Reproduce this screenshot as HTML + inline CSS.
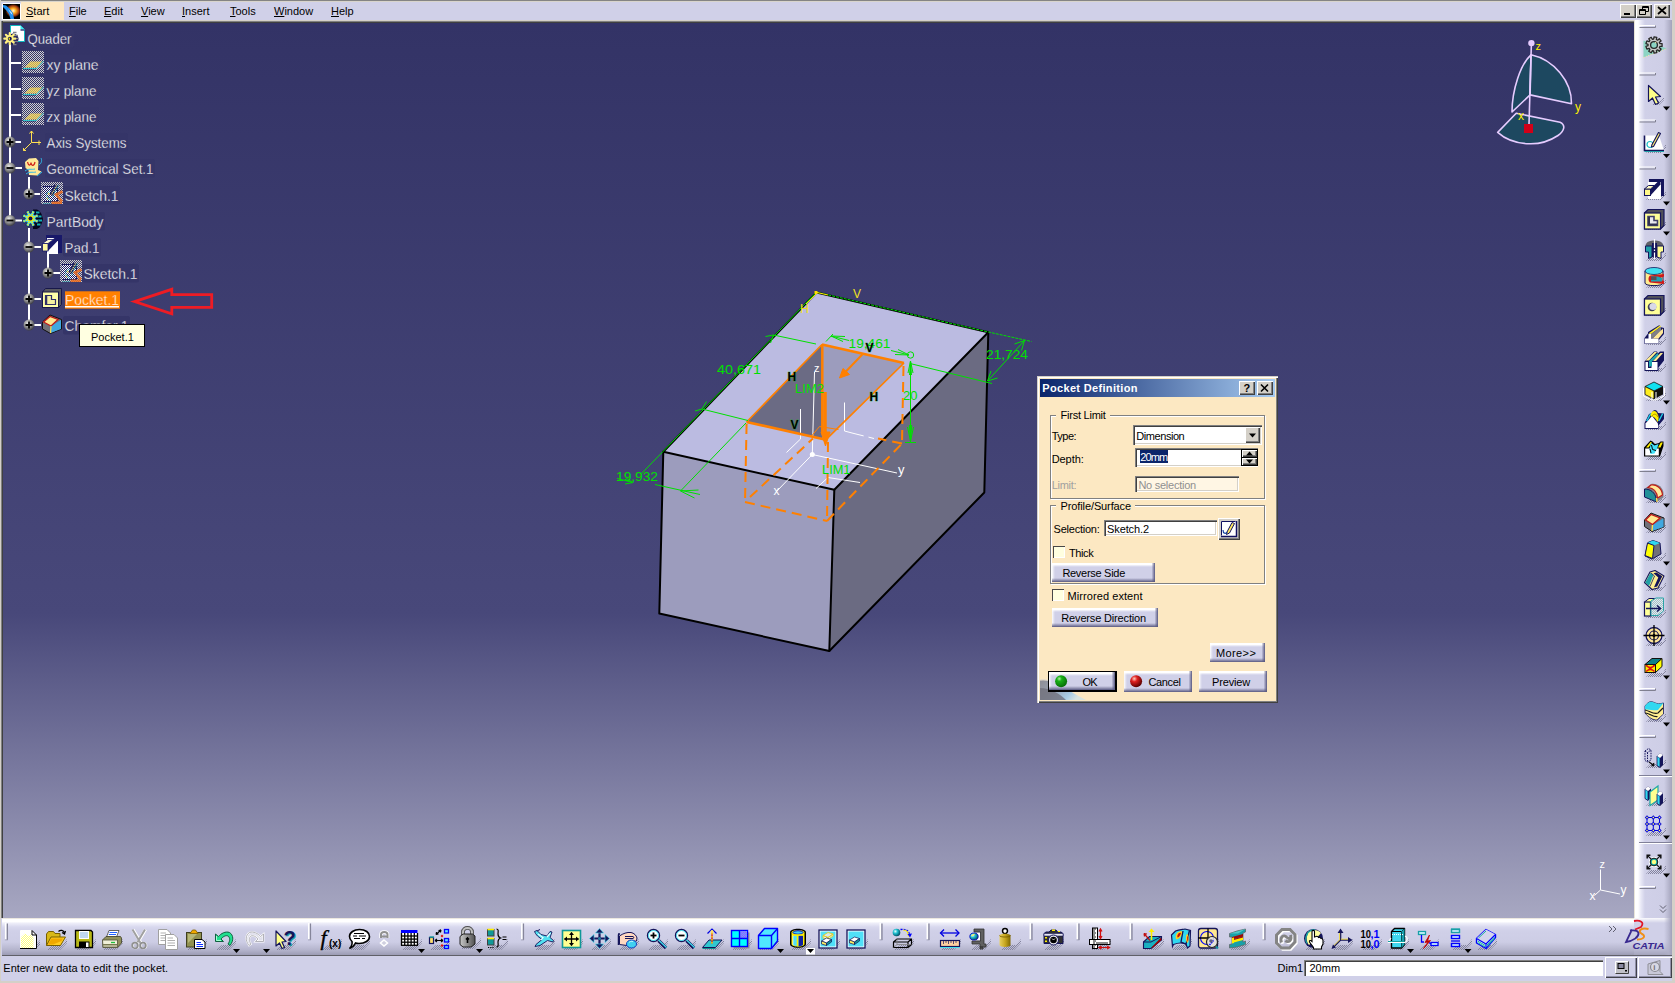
<!DOCTYPE html>
<html>
<head>
<meta charset="utf-8">
<title>CATIA V5 - Quader</title>
<style>
html,body{margin:0;padding:0;}
body{width:1675px;height:983px;overflow:hidden;position:relative;background:#d0d0e8;font-family:"Liberation Sans",sans-serif;font-size:11px;color:#000;}
.abs{position:absolute;}
#frame-top{left:0;top:0;width:1675px;height:2px;background:linear-gradient(to bottom,#848484 0,#848484 1px,#d8d4cc 1px,#d8d4cc 2px);}
#frame-left{left:0;top:0;width:1px;height:983px;background:#d4d0c8;}
#frame-right{left:1672px;top:0;width:3px;height:983px;background:#d4d0c8;}
#frame-bottom{left:0;top:981px;width:1675px;height:2px;background:#d4d0c8;}
#menubar{left:2px;top:2px;width:1670px;height:18px;background:#d0d0e8;}
.mi{position:absolute;top:2px;height:18px;line-height:18px;font-size:11px;color:#000;white-space:nowrap;}
.mi u{text-decoration:underline;}
#viewport{left:2px;top:23px;width:1632px;height:895px;background:linear-gradient(to bottom,#333366 0%,#48487a 66%,#a8a8c2 100%);overflow:hidden;}
#vp-top{left:2px;top:20px;width:1632px;height:3px;background:linear-gradient(to bottom,#d4d0c8 0,#d4d0c8 1px,#808080 1px,#808080 2px,#404040 2px);}
#vp-left{left:1px;top:21px;width:2px;height:897px;background:linear-gradient(to right,#808080 0,#808080 1px,#404040 1px,#404040 2px);}
#btoolbar{left:2px;top:918px;width:1632px;height:37px;background:linear-gradient(to bottom,#ece8e0 0px,#ece8e0 1px,#ffffff 1px,#ffffff 3.5px,#ececf8 5.5px,#d8d8ee 9px,#d0d0e8 13px,#cdcde5 24px,#b4b4cc 32px,#9c9cb4 37px);}
#bline{left:2px;top:955px;width:1670px;height:1px;background:#606068;}
#status{left:2px;top:956px;width:1670px;height:25px;background:#d0d0e8;}
#rtoolbar{left:1634px;top:20px;width:38px;height:898px;background:linear-gradient(to right,#e8e4d8 0px,#e8e4d8 1px,#ffffff 1px,#ffffff 4px,#e8e8f6 7px,#d0d0e8 11px,#cecee6 30px,#b4b4cc 35px,#a2a2ba 38px);}
.wbtn{top:4px;width:16px;height:14px;background:#d4d0c8;box-shadow:inset 1px 1px 0 #fff,inset -1px -1px 0 #404040,inset -2px -2px 0 #808080;}
.wbtn svg{display:block;}
.t{position:absolute;white-space:nowrap;font-size:11px;line-height:14px;height:14px;}
#dlg{background:#fce8c2;box-shadow:inset 1px 1px 0 #d4d0c8,inset 2px 2px 0 #ffffff,inset -1px -1px 0 #404040,inset -2px -2px 0 #808080;}
#dlgtitle{background:linear-gradient(to right,#0a246a 0%,#a6caf0 100%);}
.tbtn{width:16px;height:14px;background:#d4d0c8;box-shadow:inset 1px 1px 0 #fff,inset -1px -1px 0 #404040,inset -2px -2px 0 #808080;}
.tbtn svg{display:block;}
.grp{border:1px solid #808080;box-shadow:1px 1px 0 #fff,inset 1px 1px 0 #fff;}
.sunk{box-shadow:inset 1px 1px 0 #808080,inset 2px 2px 0 #404040,inset -1px -1px 0 #fff,inset -2px -2px 0 #d4d0c8;}
.cbtn{background:#d4d0c8;box-shadow:inset 1px 1px 0 #fff,inset -1px -1px 0 #404040,inset -2px -2px 0 #808080;}
.btn{background:linear-gradient(to left,#585880 0,rgba(88,88,128,0.55) 1.5px,rgba(88,88,128,0) 3.5px) ,linear-gradient(to top,#585880 0,rgba(88,88,128,0.6) 1.5px,rgba(88,88,128,0) 4px),linear-gradient(to bottom,#fff 0,#fff 1.5px,rgba(255,255,255,0) 4px),linear-gradient(to right,#fff 0,rgba(255,255,255,0.6) 1px,rgba(255,255,255,0) 3px),#d0d0e8;}
.btn2{background:#d4d0c8;box-shadow:inset 1px 1px 0 #fff,inset -1px -1px 0 #404040,inset -2px -2px 0 #808080;}
.chk{width:12px;height:12px;background:#ffffe0;box-shadow:inset 1px 1px 0 #484848,inset -1px -1px 0 #ffffff;}
.sbtn{background:#d0d0e8;box-shadow:inset 1px 1px 0 #fff,inset -1px -1px 0 #404048,inset -2px -2px 0 #9090a8;}
#corner{left:1634px;top:918px;width:38px;height:37px;background:linear-gradient(to left,#a0a0b8 0,rgba(176,176,200,0.8) 3px,rgba(208,208,232,0) 8px),linear-gradient(to bottom,rgba(255,255,255,0.9) 0,rgba(255,255,255,0) 5px),linear-gradient(to bottom,#d0d0e8 0,#d0d0e8 24px,#b8b8d0 32px,#a4a4bc 37px);}
</style>
</head>
<body>
<div class="abs" id="menubar"></div>
<div class="abs" id="starthl" style="left:21px;top:2px;width:43px;height:18px;background:#ffe8c0;"></div>
<svg class="abs" style="left:2px;top:3px" width="19" height="17" viewBox="0 0 19 17">
<defs><radialGradient id="fire" cx="0.6" cy="0.45" r="0.45"><stop offset="0" stop-color="#fff8e0"/><stop offset="0.35" stop-color="#ffb020"/><stop offset="0.75" stop-color="#a03810"/><stop offset="1" stop-color="#000"/></radialGradient></defs>
<rect x="0" y="0" width="19" height="17" rx="1.5" fill="#fff"/>
<rect x="1" y="1" width="17" height="15" fill="#000"/>
<rect x="1" y="1" width="17" height="15" fill="url(#fire)"/>
<path d="M1 2 L4 2.5 L8 6 L11 10 L12 16 L8.5 16 L7 11 L4 7 L1 4 Z" fill="#2090f0"/>
<path d="M6 6 L9.5 9.5 L10.5 12 L9 10.5 Z" fill="#e8f4ff"/>
</svg>
<div class="mi" style="left:26px"><u>S</u>tart</div>
<div class="mi" style="left:69px"><u>F</u>ile</div>
<div class="mi" style="left:104px"><u>E</u>dit</div>
<div class="mi" style="left:141px"><u>V</u>iew</div>
<div class="mi" style="left:182px"><u>I</u>nsert</div>
<div class="mi" style="left:230px"><u>T</u>ools</div>
<div class="mi" style="left:274px"><u>W</u>indow</div>
<div class="mi" style="left:331px"><u>H</u>elp</div>
<div class="abs wbtn" style="left:1620px"><svg width="16" height="14"><rect x="4" y="9" width="6" height="2" fill="#000"/></svg></div>
<div class="abs wbtn" style="left:1636px"><svg width="16" height="14"><path d="M6.5 2.5h6v5h-6z M6.5 3.5h6 M3.5 5.5h6v5h-6z M3.5 6.5h6" fill="none" stroke="#000" stroke-width="1"/><rect x="4" y="7" width="5" height="3" fill="#d4d0c8"/></svg></div>
<div class="abs wbtn" style="left:1654px"><svg width="16" height="14"><path d="M4 3l8 7M12 3l-8 7" stroke="#000" stroke-width="1.7" fill="none"/></svg></div>
<div class="abs" id="viewport"></div>
<div class="abs" id="vp-top"></div>
<div class="abs" id="vp-left"></div>
<div class="abs" id="btoolbar"></div>
<div class="abs" id="rtoolbar"></div>
<div class="abs" id="corner"></div>
<div class="abs" id="bline"></div>
<div class="abs" id="status"></div>
<div class="abs" id="frame-top"></div>
<div class="abs" id="frame-left"></div>
<div class="abs" id="frame-right"></div>
<div class="abs" id="frame-bottom"></div>
<svg class="abs" id="scene" style="left:0;top:0" width="1675" height="983" viewBox="0 0 1675 983">
<defs>
<clipPath id="vpclip"><rect x="2" y="23" width="1632" height="895"/></clipPath>
<pattern id="dith" width="2" height="2" patternUnits="userSpaceOnUse"><rect x="0" y="0" width="1" height="1" fill="#d0d0d0"/><rect x="1" y="1" width="1" height="1" fill="#d0d0d0"/></pattern>
<pattern id="dithw" width="2" height="2" patternUnits="userSpaceOnUse"><rect x="0" y="0" width="1" height="1" fill="#ffffff"/><rect x="1" y="1" width="1" height="1" fill="#ffffff"/></pattern>
<pattern id="dithy" width="2" height="2" patternUnits="userSpaceOnUse"><rect x="0" y="0" width="1" height="1" fill="#ffe060"/><rect x="1" y="1" width="1" height="1" fill="#ffe060"/><rect x="1" y="0" width="1" height="1" fill="#b0a070"/><rect x="0" y="1" width="1" height="1" fill="#b0a070"/></pattern>
<radialGradient id="ball" cx="0.4" cy="0.35" r="0.65"><stop offset="0" stop-color="#e8e8e8"/><stop offset="0.5" stop-color="#989898"/><stop offset="1" stop-color="#404048"/></radialGradient>
<g id="nplus"><circle cx="0" cy="0" r="5.5" fill="url(#ball)"/><path d="M-3.5 0h7M0 -3.5v7" stroke="#000" stroke-width="1.8" fill="none"/></g>
<g id="nminus"><circle cx="0" cy="0" r="5.5" fill="url(#ball)"/><path d="M-3.5 0h7" stroke="#000" stroke-width="1.8" fill="none"/></g>
<g id="plane"><rect x="0" y="0" width="22" height="22" fill="url(#dith)"/><path d="M2.5 16.5 L8.5 10.5 L20.5 10.5 L14.5 16.5 Z" fill="url(#dithy)"/><path d="M1 17.5h13.5l7-7.5" stroke="#30c0c8" stroke-width="1" fill="none"/><path d="M1.5 18.5h12" stroke="#102060" stroke-width="1" stroke-dasharray="1 1"/></g>
<g id="sketch"><rect x="0" y="0" width="22" height="22" fill="url(#dith)"/><rect x="2" y="4" width="15" height="16" fill="#1c1c60"/><rect x="2" y="5" width="14" height="14" fill="url(#dithw)"/><path d="M15 3 L10 13" stroke="#1c1c60" stroke-width="3.500"/><path d="M15.500 3.500 L10.300 12.600" stroke="#ffff80" stroke-width="1.300" stroke-dasharray="1 1"/><path d="M17.500 3.500 L11.300 15.500 M5 12 L9.500 9 M5.500 14 L10 19" stroke="#30b0b8" stroke-width="1.300" stroke-dasharray="1 1"/><path d="M7 11 l1.500 1.500 M6 16 l1 1" stroke="#ffff80" stroke-width="1.300"/><path d="M21.500 9.500 L15 12.500 L21 19.500 M10.500 20.800 h10.500" stroke="#f07020" stroke-width="2.600" fill="none" stroke-opacity="0.850"/><path d="M2.500 21.500h8" stroke="#30b0b8" stroke-width="1.200" stroke-dasharray="1 1"/></g>
</defs>
<g clip-path="url(#vpclip)">
<g id="model" font-family="'Liberation Sans',sans-serif">
<!-- box faces -->
<polygon points="816.5,292.5 988.3,332.3 834.3,489.8 663.3,451.8" fill="#bbbbe1"/>
<polygon points="663.3,451.8 834.3,489.8 829.3,651 659.3,613.5" fill="#9c9cbd"/>
<polygon points="834.3,489.8 988.3,332.3 984.3,492.5 829.3,651" fill="#6b6b82"/>
<!-- pocket interior -->
<polygon points="822,344.5 746.6,422 822.3,438.9" fill="#6b6b84"/>
<polygon points="822,344.5 904,363 826,439.7 822.3,438.9" fill="#9c9cbd"/>
<!-- box edges -->
<g stroke="#000000" stroke-width="2" fill="none" stroke-linejoin="round" stroke-linecap="round">
<path d="M816.5 292.5 L663.3 451.8 L834.3 489.8 L988.3 332.3 L816.5 292.5"/>
<path d="M663.3 451.8 L659.3 613.5 L829.3 651 L834.3 489.8"/>
<path d="M829.3 651 L984.3 492.5 L988.3 332.3"/>
</g>
<!-- green top edges (sketch constraints) -->
<g stroke="#00e000" stroke-width="1" fill="none">
<path d="M816.5 292.2 L988.3 332 L1031.500 341.500" stroke-dasharray="3 1"/>
<path d="M816.5 292 L663 451.500 L641 474"/>
</g>
<!-- yellow sketch origin marks -->
<g stroke="#ffe000" stroke-width="1" fill="none"><path d="M817 292.500 L828 295 M817 293 l-11 11"/><rect x="814.500" y="291" width="3" height="3" fill="#ffe000" stroke="none"/></g>
<text x="853" y="298" font-size="12" fill="#f0e020">V</text>
<text x="800" y="313" font-size="12" fill="#f0e020" textLength="9" lengthAdjust="spacingAndGlyphs">H</text>
<!-- white axis system -->
<g stroke="#ffffff" stroke-width="1" fill="none">
<path d="M812.300 454.500 L814.500 372"/>
<path d="M812.300 454.500 L776 492"/>
<path d="M812.300 454.500 L897 473"/>
<path d="M800.500 409 V439 L786.500 452.500"/>
<path d="M844.500 402.500 V431 L852 433"/>
<path d="M852 433 L874 438.500" stroke-dasharray="12 5"/>
<path d="M816 488.500 L828 477.500 L860 482.500"/>
</g>
<circle cx="812.300" cy="454.500" r="2.500" fill="#ffffff"/>
<text x="814" y="372" font-size="11" fill="#ffffff">z</text>
<text x="898" y="474" font-size="13" fill="#ffffff">y</text>
<text x="773.500" y="495" font-size="12" fill="#ffffff">x</text>
<!-- orange pocket -->
<g stroke="#ff8000" fill="none">
<path d="M822 344.500 L904 363 M746.600 422 L826 439.700" stroke-width="2.600"/>
<path d="M822 344.500 L746.600 422 M904 363 L826 439.700" stroke-width="1.700"/>
<path d="M822.300 344.500 V432" stroke-width="2.500"/>
<path d="M825 392 V438" stroke-width="3.500"/>
<path d="M821 432 L825.500 446 L830 432 Z" fill="#ff8000" stroke-width="1"/>
<path d="M811.500 436 L819.500 426.500 L838.500 429.500" stroke-width="1"/>
<path d="M862.300 354.500 L842 375.500" stroke-width="2"/>
<path d="M839.500 378 L843 368.500 L849.500 374.500 Z" fill="#ff8000" stroke-width="1"/>
<g stroke-width="2" stroke-dasharray="10 6">
<path d="M746.600 424 L745 502"/>
<path d="M745 502 L827 521"/>
<path d="M828 442 L827 521"/>
<path d="M903.500 366 L902 443"/>
<path d="M827 521 L902 443.500"/>
<path d="M750 497 L813 438.500"/>
<path d="M902 443.500 L878 438.500"/>
</g>
</g>
<!-- green dimensions -->
<g stroke="#00e000" stroke-width="1" fill="none">
<path d="M773.500 335 L816 344"/>
<path d="M773.500 335 l-8 1.500 M773.500 335 l-3 8"/>
<path d="M702 409 L748 420.500"/>
<path d="M702 409 l4.500 -7.500 M702 409 l-7 2"/>
<path d="M746 423 L680.500 491"/>
<path d="M655 484.500 L700 494.500"/>
<path d="M680.500 491 l18 -1 M680.500 491 l14 7"/>
<path d="M617 478.500 l16 4 M633 482.500 l-7 -4.500 M633 482.500 l-8 1.500"/>
<path d="M831 336 L849 340.500 M831 336 l14 0.500 M831 336 l12 5.500 M826 341.500 l7 -7.500"/>
<path d="M891 350.500 L909 355 M909 355 l-14 -0.500 M909 355 l-11 -5.500"/>
<circle cx="910.500" cy="355" r="3.200"/>
<path d="M910.500 361 V442 M905 442.500 h11"/>
<path d="M910.500 361 l-2.500 12 M910.500 361 l2.500 12 M910.500 361 l-1 14 M910.500 361 l1 14"/>
<path d="M910.500 441 l-3 -14 M910.500 441 l3 -14 M910.500 441 l-1.200 -16 M910.500 441 l1.200 -16"/>
<path d="M910 363.500 L992 383.500"/>
<path d="M1024.500 340.500 L987.500 381"/>
<path d="M1024.500 340.500 l-10 3.500 M1024.500 340.500 l-3 10"/>
<path d="M987.500 381 l3.500 -10 M987.500 381 l10 -3"/>
</g>
<g font-size="13" fill="#00e000">
<text x="717" y="373.500" textLength="44" lengthAdjust="spacingAndGlyphs">40,671</text>
<text x="616" y="480.500" textLength="42" lengthAdjust="spacingAndGlyphs">19,932</text>
<text x="848.500" y="347.500" textLength="42" lengthAdjust="spacingAndGlyphs">19,461</text>
<text x="986" y="359" textLength="42" lengthAdjust="spacingAndGlyphs">21,724</text>
<text x="903" y="400" textLength="14.500" lengthAdjust="spacingAndGlyphs">20</text>
<text x="795" y="393" textLength="29" lengthAdjust="spacingAndGlyphs">LIM2</text>
<text x="822" y="474" textLength="28.500" lengthAdjust="spacingAndGlyphs">LIM1</text>
</g>
<g font-size="12" font-weight="bold" fill="#000000" stroke="#00c000" stroke-width="0.500" paint-order="stroke">
<text x="787.500" y="381">H</text>
<text x="790.500" y="429">V</text>
<text x="865.500" y="352">V</text>
<text x="869.500" y="401">H</text>
</g>
</g>
<g id="tree" font-family="'Liberation Sans',sans-serif" font-size="15" fill="#ffffff">
<!-- structure lines -->
<g stroke="#ffffff" stroke-width="2" fill="none">
<path d="M10 44.500 V220.500"/>
<path d="M10 63 H21 M10 89 H21 M10 115 H21 M10 142 H21 M10 168 H22 M10 220.500 H22"/>
<path d="M29 177 V194 H40"/>
<path d="M29 228 V325 M29 247 H41 M29 299 H41 M29 325 H41"/>
<path d="M48 254 V273 H60"/>
</g>
<!-- label backgrounds -->
<g fill="#353568">
<rect x="26" y="29.0" width="48" height="18.500" rx="2"/>
<rect x="45" y="55.0" width="56" height="18.500" rx="2"/>
<rect x="45" y="81.0" width="54" height="18.500" rx="2"/>
<rect x="45" y="107.0" width="54" height="18.500" rx="2"/>
<rect x="45" y="133.0" width="83" height="18.500" rx="2"/>
<rect x="45" y="159.0" width="110" height="18.500" rx="2"/>
<rect x="63" y="186.0" width="57" height="18.500" rx="2"/>
<rect x="45" y="212.0" width="60" height="18.500" rx="2"/>
<rect x="63" y="238.0" width="38" height="18.500" rx="2"/>
<rect x="82" y="264.0" width="57" height="18.500" rx="2"/>
<rect x="63" y="316.0" width="67" height="18.500" rx="2"/>
</g>
<!-- nodes -->
<use href="#nplus" x="10" y="142"/>
<use href="#nminus" x="10" y="168"/>
<use href="#nplus" x="29" y="194"/>
<use href="#nminus" x="10" y="220.500"/>
<use href="#nminus" x="29" y="247"/>
<use href="#nplus" x="48" y="273"/>
<use href="#nplus" x="29" y="299"/>
<use href="#nplus" x="29" y="325"/>
<!-- Quader icon -->
<g>
<path d="M10.500 25.500 H20.500 L24.500 29.500 V41.500 H10.500 Z" fill="#ffffff" stroke="#10b8c0" stroke-width="1"/>
<path d="M20.500 25.500 V29.500 H24.500 Z" fill="#40e8f0"/><path d="M20.500 30 H24.500" stroke="#101060" stroke-width="1.200"/>
<circle cx="13" cy="39" r="5.500" fill="#14145a"/>
<g stroke="#808088" stroke-width="1.300"><path d="M13 32.500h3.500M14 35.500h4M14.500 38.500h4M14 41.500h4M13 44.500h3.500"/></g>
<g stroke="#fff080" stroke-width="2.200" stroke-linecap="round"><path d="M9.800 33.200v11M4.300 38.700h11M5.900 34.800l7.800 7.800M13.700 34.800l-7.800 7.800"/></g>
<circle cx="9.800" cy="38.700" r="3.800" fill="#fff080"/>
<circle cx="9.800" cy="38.700" r="2" fill="#14145a"/><path d="M9.300 37.700 v2" stroke="#ffee00" stroke-width="1.200"/>
</g>
<use href="#plane" x="22" y="51"/>
<use href="#plane" x="22" y="77"/>
<use href="#plane" x="22" y="103"/>
<!-- Axis systems icon -->
<g stroke="#ffe050" stroke-width="1" fill="none"><path d="M31.5 131 V142.5 H41 M31.5 142.5 L23.5 150.5 M29.5 133.5 L31.5 131 L33.5 133.5 M39 140.5 V145 M23.5 148 V150.5 H26"/></g>
<!-- Geometrical set icon -->
<g>
<path d="M25 162 L29 158.5 L36 158 L38.5 161 L38 170 L41.5 171.5 L37 175.5 L29 175 L28.5 170 L25.5 168 Z" fill="#ffe898"/>
<path d="M27.5 162 c1 4 3 4 3.5 0.5 c0.5 4 3 4 4 -0.5" stroke="#d02018" stroke-width="1.2" fill="none"/>
<path d="M25 171 c4 -3 6 -1 10 -2 M26 174 c4 -3 6 -1 10 -2 M39 165 c3 -2 3 -5 2 -7 M37 176 l5 -4" stroke="#30b8e8" stroke-width="1" fill="none"/>
</g>
<use href="#sketch" x="41" y="182"/>
<!-- PartBody icon -->
<g>
<path d="M33 209.500 H37 L39.500 211 L41.500 214 L43 219 L41.500 224 L39.500 227.500 L37 229 H33 Z" fill="#05051c"/>
<g stroke="#10b0b8" stroke-width="2"><path d="M36 212.500h3.500M37 216.500h4.500M37.500 220.500h4.500M37 224.500h3.500"/></g>
<path d="M38.67 219.96 L37.31 223.25 L34.70 221.73 L33.73 222.70 L35.25 225.31 L31.96 226.67 L31.18 223.76 L29.82 223.76 L29.04 226.67 L25.75 225.31 L27.27 222.70 L26.30 221.73 L23.69 223.25 L22.33 219.96 L25.24 219.18 L25.24 217.82 L22.33 217.04 L23.69 213.75 L26.30 215.27 L27.27 214.30 L25.75 211.69 L29.04 210.33 L29.82 213.24 L31.18 213.24 L31.96 210.33 L35.25 211.69 L33.73 214.30 L34.70 215.27 L37.31 213.75 L38.67 217.04 L35.76 217.82 L35.76 219.18 Z" fill="#40dcff" stroke="#10103c" stroke-width="0.600"/>
<path d="M34.01 219.95 L37.52 221.41 M31.95 222.01 L33.41 225.52 M29.05 222.01 L27.59 225.52 M26.99 219.95 L23.48 221.41 M26.99 217.05 L23.48 215.59 M29.05 214.99 L27.59 211.48 M31.95 214.99 L33.41 211.48 M34.01 217.05 L37.52 215.59 " stroke="#ffee00" stroke-width="1.600" stroke-dasharray="1.300 1.100" fill="none"/>
<circle cx="30.500" cy="218.500" r="3.200" fill="#ffee00"/><circle cx="30.500" cy="218.500" r="2" fill="#10104a"/>
</g>
<!-- Pad.1 icon -->
<g>
<rect x="46" y="235" width="16" height="18" fill="#18186a"/>
<rect x="47" y="238" width="11" height="16" fill="#ffffff"/>
<path d="M48 243.500 L54.500 238 H58 V240.500 L48 251 Z" fill="#18186a"/>
<rect x="42.500" y="243.500" width="5.500" height="7.500" fill="#fff8a0" stroke="#18186a" stroke-width="0.800"/>
<path d="M42.500 243.500 L48 239.500 H53.500 L48 243.500 Z" fill="#fffbd0" stroke="#18186a" stroke-width="0.800"/>
</g>
<use href="#sketch" x="60" y="260"/>
<!-- Pocket.1 icon -->
<g>
<path d="M42.500 292 L45.500 288.500 H61.500 V304.500 L58.500 307.500 H42.500 Z" fill="#585860" stroke="#18184a" stroke-width="1"/>
<rect x="42.500" y="292" width="16" height="15.500" fill="#ffffa8" stroke="#18184a" stroke-width="1"/>
<path d="M45.500 295.500 H51.500 V299.500 H55.500 V304.500 H45.500 Z" fill="#f4f0a0" stroke="#303068" stroke-width="1.200"/>
<path d="M46.500 296 V304" stroke="#303068" stroke-width="1.500"/>
</g>
<!-- Chamfer icon -->
<g>
<path d="M42.500 322 L50 315 L61.500 319.500 V329 L50.500 333.500 L42.500 329 Z" fill="#707078" stroke="#101010" stroke-width="1"/>
<path d="M50.500 333 L51 326 L61 320 V329 Z" fill="#40a8e0"/>
<path d="M43.500 322 L50 316.500 L58 319.500 L51 326 Z" fill="#ffe890" stroke="#c01818" stroke-width="1.200"/>
<path d="M51 326 L50.500 333" stroke="#ffe050" stroke-width="1.200"/>
</g>
<!-- labels -->
<g stroke="#353568" stroke-width="0.300">
<text x="27.500" y="44" textLength="44" lengthAdjust="spacingAndGlyphs">Quader</text>
<text x="46.500" y="70" textLength="52" lengthAdjust="spacingAndGlyphs">xy plane</text>
<text x="46.500" y="96" textLength="50" lengthAdjust="spacingAndGlyphs">yz plane</text>
<text x="46.500" y="122" textLength="50" lengthAdjust="spacingAndGlyphs">zx plane</text>
<text x="46.500" y="148" textLength="80" lengthAdjust="spacingAndGlyphs">Axis Systems</text>
<text x="46.500" y="174" textLength="107" lengthAdjust="spacingAndGlyphs">Geometrical Set.1</text>
<text x="64.500" y="201" textLength="54" lengthAdjust="spacingAndGlyphs">Sketch.1</text>
<text x="46.500" y="227" textLength="57" lengthAdjust="spacingAndGlyphs">PartBody</text>
<text x="64.500" y="253" textLength="35" lengthAdjust="spacingAndGlyphs">Pad.1</text>
<text x="83.500" y="279" textLength="54" lengthAdjust="spacingAndGlyphs">Sketch.1</text>
</g>
<rect x="65" y="291.300" width="55" height="17.400" fill="#ff8000"/>
<text x="65" y="305" textLength="54" lengthAdjust="spacingAndGlyphs" stroke="#ff8000" stroke-width="0.400">Pocket.1</text>
<rect x="65" y="306" width="54" height="1.500" fill="#ffffff"/>
<text x="64.500" y="331" textLength="64" lengthAdjust="spacingAndGlyphs" stroke="#353568" stroke-width="0.300">Chamfer.1</text>
<!-- red arrow -->
<path d="M134.500 301.600 L171.800 289.300 V294.700 H211.700 V307.300 H171.800 V313.900 Z" fill="none" stroke="#ee1c24" stroke-width="2.800" stroke-linejoin="miter" stroke-miterlimit="10"/>
<!-- tooltip -->
<rect x="79.500" y="324.500" width="65" height="22" fill="#ffffe1" stroke="#000000" stroke-width="1"/>
<text x="91" y="340.500" font-size="11" fill="#000000">Pocket.1</text>
</g>
<g id="compass" font-family="'Liberation Sans',sans-serif">
<g fill="#1d4860" stroke="#e6ccff" stroke-width="1.600" stroke-linejoin="round">
<path d="M1516.200 113.300 L1560 122.200 C1566 125 1564.500 131 1558 135.500 C1549 141.500 1538 144 1529.500 143.800 C1517 143.500 1505 139 1497.700 132.400 Z"/>
<path d="M1531 54.800 C1520.500 64.200 1512 89.900 1512 112 L1530.100 94.900 Z"/>
<path d="M1531 54.800 C1553.900 59.700 1572 81.700 1571.500 103.800 L1530.100 94.900 Z"/>
</g>
<path d="M1531.400 43 L1529 124.500" stroke="#e6ccff" stroke-width="1.600" fill="none"/>
<circle cx="1531.400" cy="43.100" r="3.200" fill="#e6ccff"/>
<rect x="1524" y="124" width="9" height="9" fill="#d00018"/>
<g fill="#ffee00" font-size="11">
<text x="1535.500" y="49.500">z</text>
<text x="1575" y="110.500" font-size="12">y</text>
<text x="1518" y="120" font-size="12">x</text>
</g>
<!-- small axis bottom right -->
<g stroke="#ffffff" stroke-width="1" fill="none">
<path d="M1600.500 869.500 V890 L1620 894"/>
<path d="M1600.500 890 L1594.500 895.500"/>
</g>
<g fill="#ffffff" font-size="11">
<text x="1599.500" y="868.300">z</text>
<text x="1620.500" y="894" font-size="12">y</text>
<text x="1589.500" y="899.500" font-size="12">x</text>
</g>
</g>
</g>
</svg>
<div class="abs" id="dlg" style="left:1037px;top:376px;width:241px;height:327px;">
<div class="abs" id="dlgtitle" style="left:3px;top:3px;width:235px;height:18px;"></div>
<div class="t" style="left:5.3px;top:5.0px;color:#fff;font-weight:bold;letter-spacing:0.331px;">Pocket Definition</div>
<div class="abs tbtn" style="left:202px;top:5px;"><svg width="16" height="14"><text x="4.500" y="11" font-family="'Liberation Sans',sans-serif" font-weight="bold" font-size="11" fill="#000">?</text></svg></div>
<div class="abs tbtn" style="left:220px;top:5px;"><svg width="16" height="14"><path d="M4 3.500l7 7M11 3.500l-7 7" stroke="#000" stroke-width="1.600" fill="none"/></svg></div>
<div class="abs grp" style="left:13px;top:39px;width:213px;height:82px;"></div>
<div class="abs" style="left:19px;top:38px;width:54px;height:4px;background:#fce8c2;"></div>
<div class="t" style="left:23.6px;top:32.3px;color:#000;letter-spacing:-0.241px;">First Limit</div>
<div class="t" style="left:14.7px;top:52.9px;color:#000;letter-spacing:-0.484px;">Type:</div>
<div class="abs sunk" style="left:96px;top:49px;width:129px;height:20px;background:#fff;"></div>
<div class="t" style="left:99.3px;top:52.9px;color:#000;letter-spacing:-0.441px;">Dimension</div>
<div class="abs cbtn" style="left:208px;top:51px;width:15px;height:16px;"><svg width="15" height="16"><path d="M4 6.500h7l-3.500 4z" fill="#000"/></svg></div>
<div class="t" style="left:14.7px;top:76.1px;color:#000;letter-spacing:-0.073px;">Depth:</div>
<div class="abs sunk" style="left:98px;top:72px;width:123px;height:19px;background:#fff;"></div>
<div class="abs" style="left:103px;top:74px;width:28px;height:13px;background:#0a246a;"></div>
<div class="t" style="left:103.3px;top:74.4px;color:#fff;letter-spacing:-0.891px;">20mm</div>
<div class="abs" style="left:204px;top:73px;width:17px;height:17px;background:#000;"></div>
<div class="abs cbtn" style="left:205px;top:74px;width:15px;height:7px;"><svg width="15" height="7" style="display:block"><path d="M4 5.500h7l-3.500 -4z" fill="#000"/></svg></div>
<div class="abs cbtn" style="left:205px;top:82px;width:15px;height:7px;"><svg width="15" height="7" style="display:block"><path d="M4 1.500h7l-3.500 4z" fill="#000"/></svg></div>
<div class="t" style="left:14.7px;top:102.2px;color:#a0a0a0;letter-spacing:-0.297px;">Limit:</div>
<div class="abs sunk" style="left:98px;top:100px;width:104px;height:16px;background:#fff6e4;"></div>
<div class="t" style="left:101.4px;top:102.2px;color:#909090;letter-spacing:-0.255px;">No selection</div>
<div class="abs grp" style="left:13px;top:129px;width:213px;height:77px;"></div>
<div class="abs" style="left:19px;top:128px;width:79px;height:4px;background:#fce8c2;"></div>
<div class="t" style="left:23.6px;top:123.0px;color:#000;letter-spacing:-0.119px;">Profile/Surface</div>
<div class="t" style="left:16.6px;top:146.0px;color:#000;letter-spacing:-0.234px;">Selection:</div>
<div class="abs sunk" style="left:67px;top:144px;width:113px;height:16px;background:#fff;"></div>
<div class="t" style="left:70.0px;top:146.0px;color:#000;letter-spacing:-0.105px;">Sketch.2</div>
<div class="abs btn2" style="left:181px;top:142px;width:22px;height:22px;"><svg width="22" height="22" style="display:block"><rect x="3" y="3" width="15" height="15" fill="#fff"/><path d="M3.500 17.500V3.500H17.500" stroke="#101060" fill="none"/><path d="M3 18.500h15.500V3" stroke="#101060" stroke-width="1.500" fill="none"/><path d="M9 14 L14 4.500 L16.500 5.500 L11.500 15 L8.500 16.500 Z" fill="#ffe860" stroke="#101060" stroke-width="1"/><path d="M5 12 c0 4 3 4 4 2" stroke="#1040a0" fill="none" stroke-width="1.200"/></svg></div>
<div class="abs chk" style="left:16px;top:170px;"></div>
<div class="t" style="left:31.9px;top:170.1px;color:#000;letter-spacing:-0.356px;">Thick</div>
<div class="abs btn" style="left:15px;top:187px;width:103px;height:19px;"></div>
<div class="t" style="left:25.4px;top:189.7px;color:#000;letter-spacing:-0.289px;">Reverse Side</div>
<div class="abs chk" style="left:15px;top:213px;"></div>
<div class="t" style="left:30.6px;top:212.9px;color:#000;letter-spacing:0.067px;">Mirrored extent</div>
<div class="abs btn" style="left:15px;top:232px;width:106px;height:19px;"></div>
<div class="t" style="left:24.3px;top:234.8px;color:#000;letter-spacing:-0.161px;">Reverse Direction</div>
<div class="abs btn" style="left:173px;top:267px;width:55px;height:19px;"></div>
<div class="t" style="left:178.9px;top:269.8px;color:#000;letter-spacing:0.416px;">More&gt;&gt;</div>
<svg class="abs" style="left:3px;top:296px" width="60" height="28"><defs><linearGradient id="deco" x1="0" y1="0" x2="1" y2="0.400"><stop offset="0" stop-color="#8c8c94"/><stop offset="0.450" stop-color="#9aa4b4"/><stop offset="0.800" stop-color="#a8cce4"/><stop offset="1" stop-color="#d8e4e0"/></linearGradient></defs><path d="M0 8 C8 7 14 9 22 14 C30 19 38 24 46 28 L0 28 Z" fill="url(#deco)"/><path d="M0 16 C10 16 20 22 26 28 L0 28 Z" fill="#70707c" opacity="0.800"/><path d="M0 8 C8 7 14 9 22 14" stroke="#e8e0d0" stroke-width="1.500" fill="none" opacity="0.800"/></svg>
<div class="abs" style="left:11px;top:295px;width:69px;height:21px;background:#000;"></div>
<div class="abs btn" style="left:12px;top:296px;width:66px;height:18px;"></div>
<div class="t" style="left:45.5px;top:299.1px;color:#000;letter-spacing:-0.703px;">OK</div>
<svg class="abs" style="left:17px;top:298px" width="14" height="14"><defs><radialGradient id="gb" cx="0.350" cy="0.300" r="0.700"><stop offset="0" stop-color="#b0f0a0"/><stop offset="0.300" stop-color="#18b018"/><stop offset="1" stop-color="#087008"/></radialGradient><radialGradient id="rb" cx="0.350" cy="0.300" r="0.700"><stop offset="0" stop-color="#ffd0c0"/><stop offset="0.350" stop-color="#e02020"/><stop offset="1" stop-color="#600000"/></radialGradient></defs><circle cx="7.100" cy="7.200" r="6" fill="url(#gb)"/></svg>
<div class="abs btn" style="left:87px;top:295px;width:68px;height:21px;"></div>
<div class="t" style="left:111.5px;top:299.1px;color:#000;letter-spacing:-0.375px;">Cancel</div>
<svg class="abs" style="left:92px;top:298px" width="14" height="14"><circle cx="7.100" cy="7.200" r="6" fill="url(#rb)"/></svg>
<div class="abs btn" style="left:162px;top:295px;width:68px;height:21px;"></div>
<div class="t" style="left:175.0px;top:299.1px;color:#000;letter-spacing:-0.161px;">Preview</div>
</div>
<svg class="abs" id="rtb" style="left:0;top:0" width="1675" height="983" viewBox="0 0 1675 983">
<defs>
<pattern id="shd" width="2" height="2" patternUnits="userSpaceOnUse"><rect x="0" y="0" width="1" height="1" fill="#84849e"/><rect x="1" y="1" width="1" height="1" fill="#84849e"/></pattern>
<g id="dd"><path d="M0 0h7l-3.500 4z" fill="#000"/></g>
<g id="sepr"><path d="M0 2.500V0.500H16.500" stroke="#fff" fill="none"/><path d="M0.500 2.500H16.500V0.500" stroke="#808090" fill="none"/></g>
<g id="shadow"><path d="M3 22 l4 -4 h13 l3 -5 v4 l-5 5 z" fill="url(#shd)"/></g>
</defs>
<use href="#sepr" x="1639" y="25"/>
<g transform="translate(1643,35)"><path d="M0.500 5.500 V22.500 L24 13.500 Z" fill="#8cd4c4"/><path d="M0.500 22.500 L24 13.500" stroke="#ffe8a0" stroke-width="1" stroke-dasharray="1 1.500" fill="none"/>
<path d="M19.08 8.58 L19.08 11.42 L16.84 11.37 L16.36 12.71 L18.10 14.10 L16.27 16.28 L14.59 14.80 L13.36 15.51 L13.80 17.71 L11.00 18.20 L10.67 15.99 L9.27 15.74 L8.20 17.71 L5.73 16.28 L6.89 14.37 L5.98 13.29 L3.90 14.10 L2.92 11.42 L5.04 10.71 L5.04 9.29 L2.92 8.58 L3.90 5.90 L5.98 6.71 L6.89 5.63 L5.73 3.72 L8.20 2.29 L9.27 4.26 L10.67 4.01 L11.00 1.80 L13.80 2.29 L13.36 4.49 L14.59 5.20 L16.27 3.72 L18.10 5.90 L16.36 7.29 L16.84 8.63 Z" fill="#c8c8c8" stroke="#282828" stroke-width="1.300" stroke-linejoin="round"/>
<circle cx="11" cy="10" r="3.400" fill="#8cd4c4" stroke="#282828" stroke-width="1.300"/><path d="M12 8 l1.500 -1" stroke="#ffe8a0" stroke-width="1"/></g>
<use href="#sepr" x="1639" y="72.5"/>
<g transform="translate(1643,84)"><path d="M9 21 l5 -4 h4 l3 -4 v3 l-5 5 z" fill="url(#shd)"/><path d="M5.500 1.500 V17.500 L9.500 14 L12.500 20.500 L15.500 19 L12.500 13 L17.500 12.500 Z" fill="#ffff88" stroke="#14145a" stroke-width="1.200" stroke-linejoin="round"/></g>
<use href="#dd" x="1663" y="106.5"/>
<use href="#sepr" x="1639" y="119.5"/>
<g transform="translate(1643,131)"><use href="#shadow"/><path d="M1.500 4.500 H16 L21 19.500 H1.500 Z" fill="#fff"/><path d="M1.500 4.500 V19.500 H21" stroke="#14145a" stroke-width="1.600" fill="none"/><path d="M1.500 20.500H21" stroke="#20a0a8" stroke-width="1"/>
<circle cx="7" cy="13.500" r="3" fill="none" stroke="#20c0c8" stroke-width="1.200"/>
<path d="M15.500 1.500 L17.500 2.500 L10.500 15.500 L8.500 16 L8.800 14 Z" fill="#ffee70" stroke="#14145a" stroke-width="1.100" stroke-linejoin="round"/></g>
<use href="#dd" x="1663" y="154"/>
<use href="#sepr" x="1639" y="166.5"/>
<g transform="translate(1643,178)"><use href="#shadow"/><rect x="6" y="1" width="15" height="17" fill="#14145a"/><rect x="5" y="4" width="13" height="17" fill="#fff"/>
<path d="M7.500 11 L14.500 4 H17.500 V6.500 L7.500 17.500 Z" fill="#14145a"/>
<rect x="1.500" y="11" width="6" height="6.500" fill="#fff888" stroke="#14145a" stroke-width="1"/>
<path d="M1.500 11 L5.500 7.500 H11.500 L7.500 11 Z" fill="#fffbc0" stroke="#14145a" stroke-width="1"/></g>
<use href="#dd" x="1663" y="201.5"/>
<g transform="translate(1643,208)"><use href="#shadow"/><path d="M1.500 5 L5 1.500 H21 V17.500 L17.500 21 H1.500 Z" fill="#505058" stroke="#14145a" stroke-width="1.200"/>
<rect x="1.500" y="5" width="16" height="16" fill="#ffff98" stroke="#14145a" stroke-width="1.200"/>
<path d="M5 8.500 H11 V12.500 H14.500 V17.500 H5 Z" fill="#e8e8f0" stroke="#404068" stroke-width="1.600"/>
<path d="M6 9 V17 M6 16.500 H14" stroke="#303050" stroke-width="2"/></g>
<use href="#dd" x="1663" y="231.5"/>
<g transform="translate(1643,239)"><use href="#shadow"/><path d="M2.500 7 C3 2 8 1.500 11 1.500 C15 1.500 20 2.500 20.500 7 L11 9 Z" fill="#606068"/>
<path d="M2.500 7 H9 V18 L5.500 19.500 V13 H2.500 Z" fill="#20a0a8" stroke="#14145a" stroke-width="1"/>
<path d="M14 7 H20.500 V13 H18 V19.500 L14 18 Z" fill="#ffff90" stroke="#14145a" stroke-width="1"/>
<path d="M9 4 H14 V18 L11.500 19 L9 18 Z" fill="#14145a"/>
<path d="M11.500 0 V20" stroke="#fff" stroke-width="1.200" stroke-dasharray="9 1.500 1.500 1.500"/></g>
<g transform="translate(1643,266)"><use href="#shadow"/><path d="M2 5 V17 C2 20.500 20 20.500 20 17 V5 Z" fill="#ffec90" stroke="#14145a" stroke-width="1"/>
<ellipse cx="11" cy="5" rx="9" ry="3.500" fill="#40e0f0" stroke="#14145a" stroke-width="0.800"/>
<path d="M21 8 L7 9.500 C5 11 5 15 7 16.500 L21 18 V15 L15 13 L21 10.500 Z" fill="#d01818"/>
<path d="M8 10.500 H15 L19 12 V15.500 L8 15.500 Z" fill="#20a0b0"/>
<path d="M8 10.500 H13.500 V14 H8 Z" fill="#505058"/></g>
<g transform="translate(1643,294)"><use href="#shadow"/><path d="M1.500 5 L5 1.500 H21 V17.500 L17.500 21 H1.500 Z" fill="#505058" stroke="#14145a" stroke-width="1.200"/>
<rect x="1.500" y="5" width="16" height="16" fill="#ffff98" stroke="#14145a" stroke-width="1.200"/>
<circle cx="9" cy="13" r="4.300" fill="#404058"/><circle cx="10" cy="12.500" r="3.600" fill="#d8d8e8"/></g>
<g transform="translate(1643,323)"><use href="#shadow"/><path d="M1.500 15 L5 10.500 L5 9 L16.500 2 L17 4 L21 5 V11 L15.500 17.500 V21 H1.500 Z" fill="#14145a"/>
<path d="M2 15.500 H5.500 V11 H8 V15.500 H15.500 V20.500 H2 Z" fill="#fff"/>
<path d="M5.500 10.500 L17 2.500 L18 3.500 L8 11 Z" fill="#ffee20"/>
<path d="M8 11 L18 3.500 L18 8 L9.500 15 L8 15 Z" fill="#808088"/>
<path d="M9.500 15.500 L20 5.500 L20 10 L15.500 15.500 Z" fill="#ffe898"/></g>
<g transform="translate(1643,350)"><use href="#shadow"/><path d="M1.500 11.500 L11 1.500 H14 L15 3.500 L17 1.500 H21 V10.500 L15.500 17.500 V21 H1.500 Z" fill="#14145a"/>
<path d="M2.500 10.500 L11.500 2 H14 L6 10.500 Z" fill="#ffee90"/>
<path d="M2.500 12 H5 V18 H8.500 V12 H14.500 V20 H2.500 Z" fill="#fff"/>
<path d="M6 11 L14.500 3 L15.500 5 L9 11.500 V16 L6 17 Z" fill="#20a8b0"/>
<path d="M10 11 L17.500 3 H20 L13 11 Z" fill="#ffee90"/></g>
<g transform="translate(1643,379)"><use href="#shadow"/><path d="M2 7.500 L11 3 L20 7.500 L11 12 Z" fill="#10e0f0" stroke="#101010" stroke-width="0.800"/>
<path d="M2 7.500 L11 12 V20 L2 15.500 Z" fill="#ffee20" stroke="#101010" stroke-width="0.800"/>
<path d="M11 12 L20 7.500 V15.500 L11 20 Z" fill="#101010"/>
<path d="M0.500 9 V17 L9 21 L9 13 M13 13 V21 L21.500 17 V9 M9 21 H13" stroke="#fff" stroke-width="1" fill="none"/></g>
<use href="#dd" x="1663" y="400.5"/>
<g transform="translate(1643,408)"><use href="#shadow"/><path d="M1.500 15 L6 6 L9 5 C10 1 14 1 15 5 L21 5.500 V11 L15.500 17.500 V21 H1.500 Z" fill="#14145a"/>
<path d="M2.500 15.500 L9 8 L15 15.500 V20 H2.500 Z" fill="#fff"/>
<path d="M3 13 L7 5.500 L8.500 5.500 L4.500 13 Z M15 13 L19 5.500 L20.500 5.500 L16.500 13 Z" fill="#20d0e8"/>
<path d="M7.500 8 C8 2 13 1.500 14.500 6 C16 8 16 12 14.500 14 C13 10 10 8 7.500 8 Z" fill="#ffee00"/>
<path d="M9 8 C11 5 13.500 6 15 9" stroke="#b09000" stroke-width="1" fill="none"/></g>
<g transform="translate(1643,438)"><use href="#shadow"/><path d="M1 9.500 L7.500 2.500 L9.500 3.500 L12 6 L16 5 L17.500 3.500 H20.500 V8 L17 18.500 H1 Z" fill="#000"/>
<rect x="2.200" y="10.500" width="13.600" height="7" fill="#fff"/>
<path d="M3 9.500 L7.500 4 L9 4.500 L5.500 9.500 Z" fill="#ffee00"/><path d="M15 9.500 L17.800 4.500 L19.800 4.500 L17.500 9.500 Z" fill="#ffee00"/>
<path d="M8 5 L11.500 7.500 L15.500 6 L14 11 L11.500 15.500 L7.500 16 L6.500 11 Z" fill="#40e0f8"/><path d="M8.500 7 L9.500 11.500 L13 12.500 M7 11 L8 15" stroke="#000" stroke-width="1" fill="none"/></g>
<use href="#sepr" x="1639" y="469"/>
<g transform="translate(1643,481)"><use href="#shadow"/><path d="M1.500 8 L8 3 C14 2 20 6 20.500 12 V16.500 L14 21 L1.500 16 Z" fill="#808088"/>
<path d="M1.500 8 C8 8 12 12 13 17 L13.500 21 L1.500 16 Z" fill="#209098" stroke="#14145a" stroke-width="1"/>
<path d="M8 4 C13 3 19 7 19.500 14 L14.500 17 C14 11 11 7 5 6.500 Z" fill="#ffe898" stroke="#c01818" stroke-width="1.200"/>
<path d="M13.500 17 L14 21" stroke="#ffe050" stroke-width="1.400"/></g>
<use href="#dd" x="1663" y="503.5"/>
<g transform="translate(1643,511)"><use href="#shadow"/><path d="M1.500 9 L8 2 L21 7 V16 L9 20.500 L1.500 15.500 Z" fill="#707078" stroke="#181818" stroke-width="1"/>
<path d="M9 20 L9.500 14 L20.500 7.500 V16 Z" fill="#40a8e0"/>
<path d="M2.500 9 L8 3.500 L17 7 L9.500 13.500 Z" fill="#ffe890" stroke="#c01818" stroke-width="1.300"/>
<path d="M9.500 14 L9 20" stroke="#ffe050" stroke-width="1.400"/></g>
<g transform="translate(1643,539)"><use href="#shadow"/><path d="M5 3.500 L10 1.500 L17 4 L18 15 L9 20 L2 17 Z" fill="#707078" stroke="#14145a" stroke-width="1"/>
<path d="M5 3.500 L10 1.500 L17 4 L11 6.500 Z" fill="#30d8f0"/>
<path d="M4.500 4 L11 6.500 L9.500 19.500 L2 16.500 Z" fill="#ffff00" stroke="#14145a" stroke-width="1"/></g>
<use href="#dd" x="1663" y="561.5"/>
<g transform="translate(1643,569)"><use href="#shadow"/><path d="M1.500 13.500 L7 3 L12 1.500 L21 7 L15 19 L9 20.500 Z" fill="#ffee90" stroke="#14145a" stroke-width="1.100" stroke-linejoin="round"/>
<path d="M2.300 13.500 L7.500 3.800 L10.500 6 L6 17 Z" fill="#20a0a8"/>
<path d="M7 17.500 L11.500 7 L8 4" stroke="#14145a" stroke-width="0.800" fill="none"/>
<path d="M10.500 4.300 L13.500 3.500 L19.300 7.300 L14.200 17.500 L11 18.300 L15.300 8.500 Z" fill="#14145a"/></g>
<g transform="translate(1643,596)"><use href="#shadow"/><path d="M1.500 6 L6 2.500 H14 V5 L1.500 17 Z" fill="#ffff98" stroke="#14145a" stroke-width="1"/>
<rect x="1.500" y="6" width="6" height="14" fill="#ffff98" stroke="#14145a" stroke-width="1.200"/>
<path d="M8 5 L13 2 H20.500 V15 L15 19.500 H8 Z" fill="#d8f0f0" stroke="#20a8a8" stroke-width="1"/>
<path d="M8 5 L13 2 H20.500 V15 L15 19.500 H8 Z" fill="url(#shd)" opacity="0.500"/>
<path d="M3 12.500 H17 M14 9.500 L17.500 12.500 L14 15.500" stroke="#14145a" stroke-width="1.500" fill="none"/></g>
<g transform="translate(1643,624)"><use href="#shadow"/><circle cx="11" cy="11.500" r="8" fill="#ffe898" stroke="#14145a" stroke-width="1.300"/><circle cx="11" cy="11.500" r="4.500" fill="none" stroke="#14145a" stroke-width="1.200"/><circle cx="11" cy="11.500" r="1.500" fill="#000"/><path d="M11 1 V22 M0.500 11.500 H21.500" stroke="#000" stroke-width="1.300"/></g>
<g transform="translate(1643,655)"><use href="#shadow"/><path d="M2 9.500 L9 3.500 H19 L12.500 9.500 Z" fill="#108088" stroke="#101010" stroke-width="1"/>
<path d="M12.500 9.500 L19 3.500 V11.500 L12.500 17.500 Z" fill="#ffff00" stroke="#101010" stroke-width="1"/>
<rect x="2" y="9.500" width="10.500" height="8" fill="#ffee00" stroke="#101010" stroke-width="1"/>
<path d="M3 10.500 C6 13 9 13 11.500 10.500 M3 16.500 C6 14 9 14 11.500 16.500 M3 10.500 L11.500 16.500 M11.500 10.500 L3 16.500" stroke="#e01010" stroke-width="1.500" fill="none"/></g>
<use href="#dd" x="1663" y="675.5"/>
<use href="#sepr" x="1639" y="688"/>
<g transform="translate(1643,700)"><use href="#shadow"/><path d="M2 6 C6 1 8 1 11 2.500 C14 4 17 4 20.500 3 V14 L14 20 C10 20 6 18 2 13 Z" fill="#ffee90" stroke="#14145a" stroke-width="0.800"/>
<path d="M2 6 C6 1 8 1 11 2.500 C14 4 17 4 20.500 3 L15 10 C11 11 7 9 2 9.500 Z" fill="#30d8f0"/>
<path d="M2 10 C7 11 10 14.500 15 13 L20 8 M2 13 C7 13 10 17.500 14.500 16.500" stroke="#181818" stroke-width="1.200" fill="none"/></g>
<use href="#dd" x="1663" y="722.5"/>
<use href="#sepr" x="1639" y="735"/>
<g transform="translate(1643,746)"><use href="#shadow"/><path d="M2 5 L5.500 2.500 L8 4 V14 L4.500 16 L2 14.500 Z M2 5 L4.500 6.500 L8 4 M4.500 6.500 V16" stroke="#14145a" stroke-width="1" stroke-dasharray="1.500 1" fill="none"/>
<path d="M6 16 L11 19.500 M11 19.500 L8.500 19.500 M11 19.500 L10.500 17" stroke="#101010" stroke-width="1.300" fill="none"/>
<path d="M14 10 L17 7 L20 9 V19 L17 21.500 L14 19.500 Z" fill="#14145a"/>
<path d="M14 10 L17 12 V21.500 L14 19.500 Z" fill="#30d8f0" stroke="#14145a" stroke-width="0.800"/>
<path d="M14 10 L17 7 L20 9 L17 12 Z" fill="#fff"/></g>
<use href="#dd" x="1663" y="769.5"/>
<path d="M1639 775.500H1672" stroke="#808098"/><path d="M1639 776.500H1672" stroke="#fff"/>
<g transform="translate(1643,784)"><use href="#shadow"/><path d="M2 5 L5 2.500 L8 4.500 V14 L5 16.500 L2 14.500 Z" fill="#14145a"/><path d="M2 5 L5 7 V16.500 L2 14.500 Z" fill="#30d8f0" stroke="#14145a" stroke-width="0.800"/><path d="M2 5 L5 2.500 L8 4.500 L5 7 Z" fill="#fff"/>
<path d="M7 8 L15 2 V16 L7 21.500 Z" fill="#ffff90" stroke="#20a8a8" stroke-width="1.200"/>
<path d="M14 10 L17 7 L20 9 V19 L17 21.500 L14 19.500 Z" fill="#14145a"/><path d="M14 10 L17 12 V21.500 L14 19.500 Z" fill="#30d8f0" stroke="#14145a" stroke-width="0.800"/><path d="M14 10 L17 7 L20 9 L17 12 Z" fill="#fff"/></g>
<g transform="translate(1643,814)"><path d="M3 22 l4 -4 h13 l3 -5 v4 l-5 5 z" fill="url(#shd)"/><path d="M4 3.500H16.500M4 10H16.500M4 16.500H16.500M4 3.500V16.500M10.300 3.500V16.500M16.500 3.500V16.500" stroke="#0000e0" stroke-width="1" fill="none"/><path d="M4 1.2999999999999998 l2.200 2.200 l-2.200 2.200 l-2.200 -2.200 z" fill="#0000e0"/><rect x="3.3" y="2.8" width="1.400" height="1.400" fill="#ffff60"/><path d="M4 7.8 l2.200 2.200 l-2.200 2.200 l-2.200 -2.200 z" fill="#0000e0"/><rect x="3.3" y="9.3" width="1.400" height="1.400" fill="#ffff60"/><path d="M4 14.3 l2.200 2.200 l-2.200 2.200 l-2.200 -2.200 z" fill="#0000e0"/><rect x="3.3" y="15.8" width="1.400" height="1.400" fill="#ffff60"/><path d="M10.3 1.2999999999999998 l2.200 2.200 l-2.200 2.200 l-2.200 -2.200 z" fill="#0000e0"/><rect x="9.600000000000001" y="2.8" width="1.400" height="1.400" fill="#ffff60"/><path d="M10.3 7.8 l2.200 2.200 l-2.200 2.200 l-2.200 -2.200 z" fill="#0000e0"/><rect x="9.600000000000001" y="9.3" width="1.400" height="1.400" fill="#ffff60"/><path d="M10.3 14.3 l2.200 2.200 l-2.200 2.200 l-2.200 -2.200 z" fill="#0000e0"/><rect x="9.600000000000001" y="15.8" width="1.400" height="1.400" fill="#ffff60"/><path d="M16.5 1.2999999999999998 l2.200 2.200 l-2.200 2.200 l-2.200 -2.200 z" fill="#0000e0"/><rect x="15.8" y="2.8" width="1.400" height="1.400" fill="#ffff60"/><path d="M16.5 7.8 l2.200 2.200 l-2.200 2.200 l-2.200 -2.200 z" fill="#0000e0"/><rect x="15.8" y="9.3" width="1.400" height="1.400" fill="#ffff60"/><path d="M16.5 14.3 l2.200 2.200 l-2.200 2.200 l-2.200 -2.200 z" fill="#0000e0"/><rect x="15.8" y="15.8" width="1.400" height="1.400" fill="#ffff60"/></g>
<use href="#dd" x="1663" y="835.5"/>
<path d="M1639 842.500H1672" stroke="#808098"/><path d="M1639 843.500H1672" stroke="#fff"/>
<g transform="translate(1643,852)"><path d="M3 22 l4 -4 h13 l3 -5 v4 l-5 5 z" fill="url(#shd)"/><g transform="translate(3,2) scale(0.800)"><circle cx="10" cy="10" r="6.500" fill="#fff"/><path d="M2 2 L18 18 M18 2 L2 18" stroke="#101010" stroke-width="1.400"/>
<path d="M1.500 5.500 V1.500 H5.500 M14.500 1.500 H18.500 V5.500 M18.500 14.500 V18.500 H14.500 M5.500 18.500 H1.500 V14.500" stroke="#101010" stroke-width="1.900" fill="none"/>
<circle cx="10" cy="10" r="4.800" fill="#18b0a8" stroke="#101010" stroke-width="1.200"/><circle cx="10" cy="10" r="2.800" fill="#ffff80"/></g></g>
<use href="#dd" x="1663" y="873.5"/>
<use href="#sepr" x="1639" y="886"/>
<path d="M1660 905.500 l3 3 l3 -3 M1660 909.500 l3 3 l3 -3" stroke="#606070" stroke-width="1" fill="none"/>
</svg>
<svg class="abs" id="btb" style="left:0;top:0" width="1675" height="983" viewBox="0 0 1675 983" font-family="'Liberation Sans',sans-serif">
<defs>
<g id="sepv"><rect x="0" y="0" width="1.700" height="16.500" fill="#fff"/><rect x="1.800" y="0.500" width="1.300" height="16.500" fill="#85859a"/><rect x="0" y="16.500" width="3" height="0.800" fill="#9a9ab0"/></g>
<g id="bshadow"><path d="M2 22 l6 -5 h9 l5 -6 v4 l-7 7 z" fill="url(#shd)"/></g>
<radialGradient id="ballc" cx="0.350" cy="0.350" r="0.700"><stop offset="0" stop-color="#e0ffff"/><stop offset="0.400" stop-color="#20c0d0"/><stop offset="1" stop-color="#004860"/></radialGradient>
<linearGradient id="gold" x1="0" y1="0" x2="1" y2="0"><stop offset="0" stop-color="#e8d060"/><stop offset="0.500" stop-color="#c8a820"/><stop offset="1" stop-color="#806800"/></linearGradient>
<linearGradient id="lockg" x1="0" y1="0" x2="1" y2="0"><stop offset="0" stop-color="#c8c8c8"/><stop offset="0.500" stop-color="#909090"/><stop offset="1" stop-color="#505050"/></linearGradient>
<pattern id="mag" width="2" height="2" patternUnits="userSpaceOnUse"><rect width="2" height="2" fill="#00ffff"/><rect x="0" y="0" width="1" height="1" fill="#ff00ff"/><rect x="1" y="1" width="1" height="1" fill="#ff00ff"/></pattern>
<pattern id="ydith" width="2" height="2" patternUnits="userSpaceOnUse"><rect width="2" height="2" fill="#fff"/><rect x="0" y="0" width="1" height="1" fill="#ffff80"/><rect x="1" y="1" width="1" height="1" fill="#ffff80"/></pattern>
</defs>
<use href="#sepv" x="4.9" y="923"/>
<g transform="translate(19,928)"><path d="M17 21 l4 -4 v-5 l-3 3 z M3 21.500 h13" fill="url(#shd)"/><path d="M1.500 2.500 H13 L17.500 7 V20.500 H1.500 Z" fill="#fff"/><path d="M2 20 V9 L6 5.500 L10 8 L12 6 L14.500 10 L14.500 20 Z" fill="url(#ydith)"/><path d="M1.500 2.500 H13 M1.500 2.500 V20.500" stroke="#fff" fill="none"/><path d="M1 20.500 H17.500 V7 L13 2.500 V7 H17.500" stroke="#000" stroke-width="1" fill="none"/></g>
<g transform="translate(45,928)"><use href="#bshadow"/><path d="M1.500 17.500 V6 L3.500 3.500 H8.500 L10 5.500 H15 V9" fill="#d8b818" stroke="#786000" stroke-width="1"/>
<path d="M1.500 17.500 L6 9 H20.500 L15.500 17.500 Z" fill="#ffcc20" stroke="#786000" stroke-width="1"/>
<path d="M3 16.500 L6.500 10.500 H18 L16.500 13 L8 16.500 Z" fill="#f0a800"/>
<path d="M13.500 3.500 C15.500 1.500 18.500 2 19.500 5 M20.500 3 L19.500 6 L17 4.500" stroke="#000" stroke-width="1.200" fill="none"/></g>
<g transform="translate(74,928)"><use href="#bshadow"/><path d="M1.500 2.500 H17 L18.500 4 V19.500 H1.500 Z" fill="#b8b818" stroke="#000" stroke-width="1.300"/>
<rect x="5" y="3" width="10" height="8" fill="#fff"/><path d="M6 5H14M6 7H14M6 9H14" stroke="#80b0e0" stroke-width="1"/>
<rect x="5" y="13.500" width="10.500" height="6" fill="#000"/><rect x="12" y="14.500" width="2.500" height="4.500" fill="#fff"/></g>
<g transform="translate(101,928)"><use href="#bshadow"/><path d="M5.500 9 L8 2.500 H18 L15.500 9 Z" fill="#fff" stroke="#404040" stroke-width="0.800"/><path d="M8.500 4.500H16M7.800 6.500H15" stroke="#2060ff" stroke-width="1.200"/>
<path d="M1.500 12 L5 8.500 H19.500 L20.500 10 V15 L16.500 19.500 H2 Z" fill="#90905c" stroke="#404028" stroke-width="0.800"/>
<path d="M1.500 12 H16.500 V19.500 H2 Z" fill="#f0f0d8" stroke="#505038" stroke-width="0.800"/><path d="M2 16.500H16.500 M2 18H16.500" stroke="#787850" stroke-width="1"/><path d="M10 14.500h4" stroke="#20c040" stroke-width="1.300"/></g>
<g transform="translate(131,928)"><path d="M2 1.500 L10 15 M14.500 1.500 L6.500 15" stroke="#fff" stroke-width="3.200"/><path d="M1.500 1.500 L9.500 15 M14 1.500 L6 15" stroke="#a0a0a0" stroke-width="2"/>
<circle cx="4.500" cy="17.500" r="2.800" fill="none" stroke="#fff" stroke-width="2"/><circle cx="12.500" cy="17.500" r="2.800" fill="none" stroke="#fff" stroke-width="2"/>
<circle cx="4" cy="17.500" r="2.800" fill="none" stroke="#909090" stroke-width="1.800"/><circle cx="12" cy="17.500" r="2.800" fill="none" stroke="#909090" stroke-width="1.800"/></g>
<g transform="translate(157,928)"><path d="M1.500 1.500 H10 L13.500 5 V16.500 H1.500 Z" fill="#fff" stroke="#a0a0a0" stroke-width="1"/><path d="M3.500 5H9M3.500 7.500H11M3.500 10H11M3.500 12.500H11" stroke="#b0b0b0" stroke-width="1"/>
<path d="M8.500 6.500 H17 L20.500 10 V21.500 H8.500 Z" fill="#fff" stroke="#a0a0a0" stroke-width="1"/><path d="M10.500 10H16M10.500 12.500H18M10.500 15H18M10.500 17.500H18" stroke="#b0b0b0" stroke-width="1"/></g>
<g transform="translate(185,928)"><use href="#bshadow"/><rect x="1.500" y="4.500" width="15" height="14.500" fill="#909050" stroke="#404020" stroke-width="1"/><path d="M3 6 H12 L3 15 Z" fill="#b8b878"/>
<path d="M5 5.500 L7.500 2 H10.500 L13 5.500 Z" fill="#f0a800" stroke="#806000" stroke-width="0.800"/>
<path d="M9.500 11.500 H17 L20 14 V20.500 H9.500 Z" fill="#fff" stroke="#000" stroke-width="1"/><path d="M11.500 14.500H16M11.500 16.500H18M11.500 18.500H18" stroke="#1030ff" stroke-width="1.200"/></g>
<g transform="translate(214,928)"><use href="#bshadow"/><path d="M1.500 6 V13.500 H9.500 L7 11 C9 8.500 12 7 14 8 C16 9.500 16.500 12.500 14 16 L16 17.500 C20 12.500 19.500 7 15.500 4.500 C11.500 3 7 5.500 4.500 8.500 Z" fill="#20e090" stroke="#106040" stroke-width="1"/><path d="M2.500 8 V12.500 H7" stroke="#a0ffd0" stroke-width="1" fill="none"/></g>
<use href="#dd" x="233" y="949"/>
<g transform="translate(244,928)"><path d="M19.500 6 V13.500 H11.500 L14 11 C12 8.500 9 7 7 8 C5 9.500 4.500 12.500 7 16 L5 17.500 C1 12.500 1.500 7 5.500 4.500 C9.500 3 14 5.500 16.500 8.500 Z" fill="#e0e0ec" stroke="#fff" stroke-width="1.800"/><path d="M19.500 6 V13.500 H11.500 L14 11 C12 8.500 9 7 7 8 C5 9.500 4.500 12.500 7 16 L5 17.500 C1 12.500 1.500 7 5.500 4.500 C9.500 3 14 5.500 16.500 8.500 Z" fill="none" stroke="#a0a0a8" stroke-width="0.800"/></g>
<use href="#dd" x="263" y="949"/>
<g transform="translate(274,928)"><use href="#bshadow"/><path d="M2 3 V18 L5.500 15 L8 20.500 L10.500 19.500 L8 14 L12 13.500 Z" fill="#ffff88" stroke="#14145a" stroke-width="1.200" stroke-linejoin="round"/>
<text x="10.500" y="17.500" font-size="20" font-weight="bold" fill="#18a0a0">?</text><text x="9.500" y="16.500" font-size="20" font-weight="bold" fill="#14145a">?</text></g>
<use href="#sepv" x="308" y="923"/>
<g transform="translate(320,928)"><use href="#bshadow"/><text x="0.500" y="17" font-family="'Liberation Serif',serif" font-style="italic" font-size="22" fill="#000" stroke="#000" stroke-width="0.400">f</text><text x="9" y="18.500" font-size="10" font-weight="bold" fill="#000">(x)</text></g>
<g transform="translate(348,928)"><use href="#bshadow"/><path d="M11.500 1.500 C17.500 1.500 21.500 4.500 21.500 8.500 C21.500 12.500 17 15.500 11 15.500 C9.500 15.500 8.500 15.500 7.500 15 C6.500 17.500 4 19.500 1.500 20.500 C3.500 18.500 4.500 16 4 13.500 C2.500 12 1.500 10.500 1.500 8.500 C1.500 4.500 6 1.500 11.500 1.500 Z" fill="#fff" stroke="#000" stroke-width="1.600"/><path d="M6 5.500H16M5 8H9M11 8H18M6 10.500H12M14 10.500H17" stroke="#000" stroke-width="1.100"/></g>
<g transform="translate(379,928)"><path d="M2 10 V6.500 C2 3 8.500 3 8.500 6.500 V10" stroke="#fff" stroke-width="3.500" fill="none"/><path d="M2 10 V6.500 C2 3 8.500 3 8.500 6.500 V10" stroke="#909090" stroke-width="2" fill="none"/><rect x="2" y="7.500" width="6.500" height="2" fill="#909090"/><path d="M5 12 l3.500 3 l-3.500 3 l-3.500 -3 z" fill="#d0d0e0" stroke="#fff" stroke-width="1.500"/></g>
<g transform="translate(400,928)"><use href="#bshadow"/><rect x="1" y="2" width="16.500" height="15.500" fill="#fff"/><rect x="1" y="2" width="16.500" height="3" fill="#0000ff"/><g stroke="#000" stroke-width="1.300"><path d="M1.5 5V17.500"/><path d="M4.7 5V17.500"/><path d="M7.9 5V17.500"/><path d="M11.100000000000001 5V17.500"/><path d="M14.3 5V17.500"/><path d="M17.5 5V17.500"/><path d="M1 8.0H18"/><path d="M1 11.1H18"/><path d="M1 14.2H18"/><path d="M1 17.3H18"/></g></g>
<use href="#dd" x="418" y="949"/>
<g transform="translate(428,928)"><use href="#bshadow"/><rect x="1.500" y="9.500" width="4" height="6" fill="#ffe070" stroke="#14145a" stroke-width="1.200"/><path d="M1.500 9 H6" stroke="#20a0a0" stroke-width="1.500"/>
<path d="M7 12.500 H15 M8 6.500 L13 2 M7 12.500 l2 -1.500 M7 12.500 l2 1.500 M15 12.500 l-2 -1.500 M15 12.500 l-2 1.500 M13 2 l-2.500 0.500 M13 2 l-0.500 2.500 M8 6.500 l2.500 -0.500 M8 6.500 l0.500 -2.500" stroke="#000" stroke-width="1.100" fill="none"/>
<g fill="#60e0ff" stroke="#0000ff" stroke-width="1.300"><rect x="16.500" y="1.500" width="4" height="3.500"/><rect x="16.500" y="10.500" width="4" height="3.500"/><rect x="16.500" y="17.500" width="4" height="3"/></g>
<path d="M14 6.500 l1.500 1.500 l-1.500 1.500 l-1.500 -1.500 z M14 16 l1.500 1.500 l-1.500 1.500 l-1.500 -1.500 z" fill="#e01010"/></g>
<g transform="translate(459,927)"><use href="#bshadow"/><path d="M4 8 V5 C4 -0.500 13 -0.500 13 5 V8" stroke="#505050" stroke-width="3.800" fill="none"/><path d="M4 8 V5 C4 -0.500 13 -0.500 13 5 V8" stroke="#c0c0c0" stroke-width="2" fill="none"/>
<path d="M1 9.500 L4 7 H13.500 L16 9 V17 L12 20 H4 L1 17.500 Z" fill="url(#lockg)" stroke="#202020" stroke-width="1"/><path d="M8.500 11 V16 M7 12.500 L8.500 11 L10 12.500" stroke="#000" stroke-width="1.600" fill="none"/></g>
<use href="#dd" x="476" y="949"/>
<g transform="translate(486,928)"><use href="#bshadow"/><rect x="1.500" y="1.500" width="6.500" height="6.500" fill="#109898" stroke="#404040" stroke-width="1"/><path d="M1.500 1.500H8" stroke="#ffee00" stroke-width="1.600"/>
<rect x="1.500" y="10.500" width="6.500" height="6.500" fill="#109898" stroke="#404040" stroke-width="1"/><path d="M1.500 10.500H8" stroke="#ffee00" stroke-width="1.600"/>
<path d="M2 19.500h6" stroke="#000" stroke-width="1.200" stroke-dasharray="1.200 1"/>
<path d="M10.500 1 C13 1 12 4 12 6 C12 8.500 13 9.500 14.500 10 C13 10.500 12 11.500 12 14 C12 16 13 19 10.500 19" stroke="#000" stroke-width="1.200" fill="none"/><path d="M16.500 9h4M16.500 11.500h4" stroke="#000" stroke-width="1.200"/></g>
<use href="#sepv" x="521" y="923"/>
<g transform="translate(533,928)"><use href="#bshadow"/><path d="M1.500 3.500 L4 2.500 L8 6.500 L14 8 L17 3.500 L19 4 L17 9.500 L20.500 12.500 L20 14 L14.500 12.500 L7 17.500 L2 18.500 L3 16.500 L9 11.500 L4.500 8 L2.500 5.500 Z" fill="#50e0f0" stroke="#14145a" stroke-width="0.900"/><path d="M5 6 L10 9.500 L8 12 M14 9 L17.500 5" stroke="#e8ffff" stroke-width="1.200" fill="none"/><path d="M4 3 L7 1.500" stroke="#14145a" stroke-width="1"/></g>
<g transform="translate(561,928)"><use href="#bshadow"/><rect x="1.500" y="2.500" width="18" height="17" fill="#ffff90" stroke="#109898" stroke-width="1.600"/>
<path d="M10.500 4.500V17.500M3.500 11H17.500" stroke="#000" stroke-width="1.300"/><path d="M10.500 4 l-2.500 3 h5z M10.500 18 l-2.500 -3 h5z M3 11 l3 -2.500 v5z M18 11 l-3 -2.500 v5z" fill="#000"/></g>
<g transform="translate(589,928)"><use href="#bshadow"/><g transform="translate(10.500,10.500)"><path d="M0 -8.500V8.500M-8.500 0H8.500" stroke="#14145a" stroke-width="2.200"/><path d="M0 -10 l-4 4.500 h8z M0 10 l-4 -4.500 h8z M-10 0 l4.500 -4 v8z M10 0 l-4.500 -4 v8z" fill="#14145a" stroke="#40e0f0" stroke-width="0.600"/><circle cx="0" cy="0" r="1.500" fill="#2080a0"/></g></g>
<g transform="translate(617,928)"><use href="#bshadow"/><path d="M1.500 6.500 V17 M1 6 H3" stroke="#14145a" stroke-width="1.500"/><path d="M2.500 8 C6 5.500 10 4 14 4.500 C17 5 19.500 7.500 20 10 L19.500 13 L12 14 L10 17.500 L2.500 16.500 Z" fill="#ffd8c0" stroke="#14145a" stroke-width="1"/><path d="M8 8.500 H16 C17 8.500 17 10.500 16 10.500 H8" stroke="#14145a" stroke-width="1" fill="#ffd8c0"/>
<ellipse cx="14.500" cy="16" rx="5" ry="4" fill="#40d0f0" stroke="#1040c0" stroke-width="1"/><path d="M12 14.500 c1 -1 2.500 -1.500 4 -1" stroke="#c0f8ff" stroke-width="1" fill="none"/></g>
<g transform="translate(646,928)"><use href="#bshadow"/><path d="M12.500 12.500 L20 20" stroke="#14145a" stroke-width="3.400"/><path d="M12 11.500 L20.500 19.500" stroke="#40e0f0" stroke-width="1.200"/><circle cx="7.500" cy="7.500" r="6" fill="#fff" stroke="#14145a" stroke-width="1.400"/><circle cx="7.500" cy="7.500" r="5" fill="none" stroke="#40e0f0" stroke-width="1"/><path d="M4.500 7.500H10.500" stroke="#000" stroke-width="1.800"/><path d="M7.500 4.500V10.500" stroke="#000" stroke-width="1.800"/></g>
<g transform="translate(674,928)"><use href="#bshadow"/><path d="M12.500 12.500 L20 20" stroke="#14145a" stroke-width="3.400"/><path d="M12 11.500 L20.500 19.500" stroke="#40e0f0" stroke-width="1.200"/><circle cx="7.500" cy="7.500" r="6" fill="#fff" stroke="#14145a" stroke-width="1.400"/><circle cx="7.500" cy="7.500" r="5" fill="none" stroke="#40e0f0" stroke-width="1"/><path d="M4.500 7.500H10.500" stroke="#000" stroke-width="1.800"/></g>
<g transform="translate(702,928)"><use href="#bshadow"/><path d="M0.500 19.500 L7 12 H20 L13.500 19.500 Z" fill="#30c8d0" stroke="#14145a" stroke-width="1"/><path d="M0.500 20.500H13.500" stroke="#109090" stroke-width="1"/>
<path d="M10 15.500 V3" stroke="#e01010" stroke-width="1.300"/><path d="M10 15.500 V3" stroke="#ffee00" stroke-width="1.300" stroke-dasharray="1.500 1.500"/><path d="M5.500 5.500 L10 1 L14.500 5.500" stroke="#0000e0" stroke-width="1.200" fill="none"/><circle cx="10" cy="3.500" r="1.500" fill="#ffe060"/></g>
<g transform="translate(730,928)"><use href="#bshadow"/><rect x="3.500" y="4.500" width="16" height="16" fill="#909090"/><rect x="1.500" y="2.500" width="16" height="16" fill="#00ffff" stroke="#0000ff" stroke-width="1.400"/><rect x="9.500" y="3" width="7.500" height="7.500" fill="url(#mag)"/><path d="M9.500 2.500V18.500M1.500 10.500H17.500" stroke="#0000ff" stroke-width="1.400"/></g>
<g transform="translate(757,928)"><use href="#bshadow"/><path d="M1.500 7.500 L7.500 0.500 H20.500 V13 L14.500 20.500 H1.500 Z" fill="#50e8ff" stroke="#0000ff" stroke-width="1.400" stroke-linejoin="round"/><path d="M1.500 7.500 H14.500 V20.500 M14.500 7.500 L20.500 0.500" stroke="#0000ff" stroke-width="1.400" fill="none"/></g>
<use href="#dd" x="777" y="949"/>
<g transform="translate(789,928)"><use href="#bshadow"/><path d="M1 4.500 C1 -0.500 17 -0.500 17 4.500 V16 C17 21 1 21 1 16 Z" fill="#000"/><path d="M2.500 4.500 C2.500 1 15.500 1 15.500 4.500 V16 C15.500 19.500 2.500 19.500 2.500 16 Z" fill="#ffee00"/>
<ellipse cx="9" cy="4.500" rx="5" ry="1.800" fill="#40d0f0" stroke="#0000c0" stroke-width="1"/>
<path d="M4 7.500 H14 V17 C12 18.500 6 18.500 4 17 Z" fill="#50e0f8"/><path d="M9.500 7.500 H14 V17 C13 17.800 11 18.200 9.500 18.200 Z" fill="#1020a0"/><path d="M4 7.500 V17" stroke="#fff" stroke-width="1.200" stroke-dasharray="1 1"/>
<path d="M4 7 H14 M8.500 7 V18" stroke="#ffee00" stroke-width="1.600"/></g>
<rect x="806" y="948" width="9" height="6.500" fill="#fff"/>
<use href="#dd" x="807" y="949"/>
<g transform="translate(818,928)"><use href="#bshadow"/><rect x="1" y="2" width="18" height="18" fill="#fff" stroke="#14145a" stroke-width="1.300"/><rect x="2.500" y="3.500" width="15" height="15" fill="#50e0f8"/><path d="M5 7.500 l5 -3 l5 1.500 l-5 3.500 z M5 7.500 l5 2 v2 l-5 -1.500z M10 9.500 l5 -3.500 v2 l-5 3.500z" fill="#d8e8f0" stroke="#e8d020" stroke-width="0.900"/><path d="M3.5 13 l5 -3 l5 1.500 l-5 3.500 z" fill="#fff" stroke="#14145a" stroke-width="0.700"/><path d="M3.5 13 l5 2 v2.500 l-5 -1.500 z" fill="#ffee60" stroke="#14145a" stroke-width="0.700"/><path d="M8.5 15 l5 -3.500 v2.500 l-5 3.500 z" fill="#109898" stroke="#14145a" stroke-width="0.700"/></g>
<g transform="translate(846,928)"><use href="#bshadow"/><rect x="1" y="2" width="18" height="18" fill="#fff" stroke="#14145a" stroke-width="1.300"/><rect x="2.500" y="3.500" width="15" height="15" fill="#50e0f8"/><path d="M3.5 12 l5 -3 l5 1.500 l-5 3.500 z" fill="#fff" stroke="#14145a" stroke-width="0.700"/><path d="M3.5 12 l5 2 v2.500 l-5 -1.500 z" fill="#ffee60" stroke="#14145a" stroke-width="0.700"/><path d="M8.5 14 l5 -3.500 v2.500 l-5 3.500 z" fill="#109898" stroke="#14145a" stroke-width="0.700"/></g>
<use href="#sepv" x="879.5" y="923"/>
<g transform="translate(892,928)"><use href="#bshadow"/><circle cx="4.500" cy="4.500" r="3.800" fill="url(#ballc)"/><path d="M8.500 1.500 C14 0.500 17.500 3 18 8" stroke="#0000ff" stroke-width="1.300" stroke-dasharray="2 1" fill="none"/><path d="M11 2 C15 2 16.500 5 16.500 8.500" stroke="#ffee00" stroke-width="1.200" fill="none"/><path d="M15.500 6 L18 9.500 L20 5.500" fill="#0000ff"/>
<path d="M1.500 14 L5 11 H19.500 V16.500 L16 19.500 H1.500 Z M1.500 14 H16 V19.500 M16 14 L19.500 11" fill="none" stroke="#000" stroke-width="1.200"/><path d="M5 11 V16.500 H19.500 M5 16.500 L1.500 19.500" stroke="#808080" stroke-width="0.800" fill="none"/></g>
<use href="#sepv" x="926.5" y="923"/>
<g transform="translate(939,928)"><use href="#bshadow"/><path d="M1.500 5H20" stroke="#0000e0" stroke-width="1.300"/><path d="M5 1.500 L1.500 5 L5 8.500 M16.500 1.500 L20 5 L16.500 8.500" stroke="#0000e0" stroke-width="1.300" fill="none"/>
<rect x="1.500" y="12.500" width="19" height="6" fill="#ffd0a0" stroke="#14145a" stroke-width="1.200"/><path d="M1.500 19.500H20.500" stroke="#40e0f0" stroke-width="1"/><g stroke="#14145a" stroke-width="0.900" stroke-opacity="0.800"><path d="M4.5 13v3"/><path d="M7.0 13v2"/><path d="M9.5 13v3"/><path d="M12.0 13v2"/><path d="M14.5 13v3"/><path d="M17.0 13v2"/></g></g>
<g transform="translate(969,928)"><use href="#bshadow"/><path d="M5 1 H15 V16 H17 V19 H11 V21 H14 V19 H11 V16 H3 V13 H11.500 V4 H5 Z" fill="#606060" stroke="#303030" stroke-width="0.800"/><rect x="6" y="5" width="5" height="7" fill="#fff"/>
<ellipse cx="5" cy="8.500" rx="4.200" ry="3.500" fill="url(#ballc)" stroke="#0000c0" stroke-width="0.800"/><path d="M2.500 8 l3 -2" stroke="#ffee60" stroke-width="1.200"/></g>
<g transform="translate(999,928)"><use href="#bshadow"/><path d="M3.500 3 C3.500 -0.500 8.500 -0.500 8.500 3 C8.500 4.500 7.500 5 7 5.500 H5 C4.500 5 3.500 4.500 3.500 3 Z" fill="#fff" stroke="#000" stroke-width="1.500"/>
<path d="M0.500 7.500 C0.500 5 11.500 5 11.500 7.500 V17 C11.500 19.500 0.500 19.500 0.500 17 Z" fill="url(#gold)"/><path d="M0.500 7.500 C0.500 9.500 11.500 9.500 11.500 7.500" stroke="#705800" stroke-width="0.800" fill="none"/></g>
<use href="#sepv" x="1029.5" y="923"/>
<g transform="translate(1042,928)"><use href="#bshadow"/><path d="M2 5.500 L4 4 H7 L9 2 H14 L15.500 4 H19 L21 5.500 V15.500 H2 Z" fill="#303030" stroke="#14145a" stroke-width="1"/><path d="M2 5.500 H21 V8 H2 Z" fill="#e8e8f0" stroke="#14145a" stroke-width="0.600"/><rect x="10" y="1.500" width="3" height="1.500" fill="#ffee00"/><rect x="3" y="9" width="2" height="1.500" fill="#ffee00"/><rect x="3" y="12.500" width="2" height="1.500" fill="#ffee00"/><rect x="16" y="3" width="2" height="1" fill="#ffee00"/>
<circle cx="11.500" cy="12" r="5" fill="#e8e8f0" stroke="#14145a" stroke-width="1"/><circle cx="11.500" cy="12" r="3.300" fill="#000"/><path d="M10 10.500 l1.500 1.500 l1.500 -1.500" stroke="#fff" stroke-width="0.800" fill="none"/></g>
<use href="#sepv" x="1076.5" y="923"/>
<g transform="translate(1089,928)"><use href="#bshadow"/><rect x="3.500" y="0" width="5" height="20.500" fill="#fff" stroke="#000" stroke-width="1"/><rect x="0.500" y="11.500" width="20.500" height="5" fill="#fff" stroke="#000" stroke-width="1"/><rect x="4" y="12" width="4" height="4" fill="#fff"/><g stroke="#000" stroke-width="0.900"><path d="M4 1h3"/><path d="M4 3h2"/><path d="M4 5h3"/><path d="M4 7h2"/><path d="M4 9h3"/><path d="M4 11h2"/><path d="M4 13h3"/><path d="M4 15h2"/><path d="M4 17h3"/><path d="M4 19h2"/><path d="M8 14v3"/><path d="M10 14v2"/><path d="M12 14v3"/><path d="M14 14v2"/><path d="M16 14v3"/><path d="M18 14v2"/></g>
<path d="M11.500 1.500V9.500M10 3.500 l1.500 -2.500 l1.500 2.500M10 8 l1.500 2.500 l1.500 -2.500" stroke="#d01010" stroke-width="1.200" fill="none"/><path d="M10.500 19.500H20M12.500 18 l-2.500 1.500 l2.500 1.500M18 18 l2.500 1.500 l-2.500 1.500" stroke="#d01010" stroke-width="1.200" fill="none"/></g>
<use href="#sepv" x="1129.5" y="923"/>
<g transform="translate(1142,928)"><use href="#bshadow"/><path d="M1.500 14 L7.500 8.500 H19.500 V12 L9 20.500 H1.500 Z" fill="#18b0c0" stroke="#14145a" stroke-width="1.100"/><path d="M1.500 14 H9 L19.500 8.500" stroke="#14145a" stroke-width="1" fill="none"/><path d="M9 20 L19 9.500 L19.500 12 L11 19.500 Z" fill="#a00000"/>
<path d="M9.500 12 V2" stroke="#ffee00" stroke-width="1.500"/><path d="M6.500 4 L9.500 0.500 L12.500 4 Z" fill="#ffee00"/><path d="M8 12.500 L2 5.500 M2 5.500 l0.500 3 M2 5.500 l3 0.500" stroke="#c01010" stroke-width="1.200" fill="none"/></g>
<g transform="translate(1170,928)"><use href="#bshadow"/><path d="M1.500 7 L5.500 3 C9 1.500 13 1.500 15 1 L20.500 2.500 L20 18 L17.500 20 L16 16 C12 14.500 7 15 3.500 16.500 L2.500 18.500 Z" fill="#30d8f0" stroke="#14145a" stroke-width="1.200"/>
<path d="M7 5 C10 2.500 13 3 12.500 5 C11.500 8.500 9 11 6.500 11.500 C5 10 5.500 7 7 5 Z" fill="#ffcc20"/><path d="M8.500 5.500 C10 4 11.500 4.500 10.500 6.500 C9.500 8.500 8.500 9.500 7.500 9.500 C7 8.500 7.500 6.500 8.500 5.500 Z" fill="#c01010"/>
<path d="M13 3 L11 14 L16 16 L19.500 2.500" fill="none" stroke="#14145a" stroke-width="1.300"/><path d="M17 6 C19 6 19 14 17.500 15 C15.500 14 15.500 7 17 6 Z" fill="#ffcc20"/><path d="M17.500 8 C18.500 8 18.500 13 18 13.500 C17 13 17 9 17.500 8 Z" fill="#c01010"/></g>
<g transform="translate(1197,928)"><use href="#bshadow"/><rect x="1.500" y="0.500" width="19" height="19.500" rx="2.500" fill="#ffe890" stroke="#14145a" stroke-width="1.300"/><circle cx="10" cy="10" r="6.500" fill="none" stroke="#0000ff" stroke-width="1.100"/><path d="M11 0.500V12M1 10H13" stroke="#000" stroke-width="1.300"/>
<circle cx="15" cy="14" r="5.500" fill="#e0e0e8" fill-opacity="0.850" stroke="#202020" stroke-width="1.200"/><path d="M12.500 17 l4 -4.500" stroke="#0000ff" stroke-width="1.500" stroke-dasharray="1.500 1"/><circle cx="14" cy="13" r="1.800" fill="#606080"/><path d="M19 18.500 l2 2" stroke="#1090a0" stroke-width="2"/></g>
<g transform="translate(1228,928)"><use href="#bshadow"/><path d="M1.500 5.500 L9 3 L17.500 1 V4 L15 5 V14 L17.500 13 V16.500 L9 19 L1.500 20 V16.500 L4 16 V9 L1.500 9 Z" fill="#18a0a8" stroke="#606868" stroke-width="0.800"/>
<path d="M4 9 L15 6 V8.500 L4 11.500 Z" fill="#a00808"/><path d="M4 11.500 L15 8.500 V11 L4 14 Z" fill="#a00808"/><path d="M4 12.500 L15 9.500 V12 L4 15 Z" fill="#ffee00"/><path d="M4 10 L6 9.500 V15 L4 15.500 Z" fill="#ffee00"/><path d="M1.500 5.500 L9 3.500 L17.500 1 L10 5.500 Z" fill="#50c8c8"/></g>
<use href="#sepv" x="1262.5" y="923"/>
<g transform="translate(1275,928)"><g transform="translate(1.200,1.200)"><path d="M7 1.500 H15 L20 6.500 V14 L14.500 20 H6.500 L1.500 15 V7 Z" fill="none" stroke="#fff" stroke-width="3"/><path d="M6.500 14.500 C4.500 9 9 6 11.500 9 C13 11 15 11.500 16 7.500 M15.500 7 C17.500 12.500 13 15.500 10.500 12.500" fill="none" stroke="#fff" stroke-width="2.800"/></g><path d="M7 1.500 H15 L20 6.500 V14 L14.500 20 H6.500 L1.500 15 V7 Z" fill="none" stroke="#848484" stroke-width="3"/><path d="M6.500 14.500 C4.500 9 9 6 11.500 9 C13 11 15 11.500 16 7.500 M15.500 7 C17.500 12.500 13 15.500 10.500 12.500" fill="none" stroke="#848484" stroke-width="2.800"/></g>
<g transform="translate(1303,928)"><use href="#bshadow"/><circle cx="10.500" cy="10.500" r="9.500" fill="#14145a"/><path d="M5 4 C9 1 15 1.500 18 5 L12 12 L6 17 C3 14 3 7.500 5 4 Z" fill="#ffffa0"/><path d="M3.500 7 C5 3 9 1.500 12 2" stroke="#18a0a0" stroke-width="1.500" fill="none"/><path d="M4 15.500 C2 12 3 8 4.500 6" stroke="#18a0a0" stroke-width="1.300" fill="none"/>
<path d="M9 3.500 C9 2 11.500 2 11.500 3.500 V9 L13 8.500 C14 8 15 8.500 15.500 9.500 C16.500 9 17.500 9.500 18 10.500 C19 10.500 20 11 20 12.500 V16 L18.500 19 V21 H10.500 V19.500 L6.500 14 C6 12.500 7.500 12 8.500 13 L9 13.500 Z" fill="#fff" stroke="#000" stroke-width="1.100"/></g>
<g transform="translate(1331,928)"><use href="#bshadow"/><path d="M9.500 12 V3 M9.500 12 H19 M9.500 12 L2 19.500" stroke="#14145a" stroke-width="1.600" fill="none"/><path d="M8.600 12 V4 M10 11.200 H18 M8.500 12 L2 18.500" stroke="#ffe840" stroke-width="0.900" fill="none"/><path d="M6.500 5 L9.500 0.500 L12.500 5 Z M17 9 L21.500 12 L17 15 Z M0.500 21 L2 16.500 L5 19.500 Z" fill="#14145a"/></g>
<g transform="translate(1360,928)"><use href="#bshadow"/><g font-weight="bold" font-size="11.500"><text x="0.500" y="10" fill="#000" textLength="10.500" lengthAdjust="spacingAndGlyphs">10</text><text x="10.500" y="10" fill="#0000ff" textLength="9" lengthAdjust="spacingAndGlyphs">,1</text><text x="0.500" y="20" fill="#000" textLength="10.500" lengthAdjust="spacingAndGlyphs">10</text><text x="10.500" y="20" fill="#0000ff" textLength="9" lengthAdjust="spacingAndGlyphs">,0</text></g></g>
<g transform="translate(1387,928)"><use href="#bshadow"/><path d="M4.500 3.500 L7.500 0.500 H17.500 V16.500 L14.500 20 H4.500 Z" fill="#40d8f0" stroke="#000" stroke-width="1.400" stroke-linejoin="round"/><path d="M14.500 3.500 V20 M4.500 3.500 H14.500 L17.500 0.500" stroke="#000" stroke-width="1" fill="none"/><path d="M14.500 3.500 L17.500 0.500 V16.500 L14.500 20 Z" fill="#18a0b0"/>
<path d="M5 6.500 H17" stroke="#fff" stroke-width="1" stroke-dasharray="1 1"/><path d="M1 14.500 H18 M18 8 C21 9 21 13 18 14.500 M1 14.500 L4 10" stroke="#fff" stroke-width="1.200" fill="none"/><path d="M1 13.500 H17.500" stroke="#18a0a0" stroke-width="1"/></g>
<use href="#dd" x="1407" y="949"/>
<g transform="translate(1417,928)"><use href="#bshadow"/><rect x="1.500" y="3.500" width="7" height="3" fill="#d0f8ff" stroke="#18a0a8" stroke-width="1.300"/><rect x="14" y="14.500" width="7" height="3" fill="#d0f8ff" stroke="#0000ff" stroke-width="1.300"/><path d="M4.500 7 V14 H7 M12 14.500 L14 16" stroke="#0000ff" stroke-width="1.300" fill="none"/>
<path d="M12.500 7 L8 14.500 L11 14 L6.500 20.500 L13.500 12.500 L10.500 13 Z" fill="#c00000" stroke="#c00000" stroke-width="0.800"/></g>
<g transform="translate(1450,928)"><use href="#bshadow"/><g fill="#d0f0ff" stroke-width="1.400"><rect x="1.500" y="1.500" width="8" height="3" stroke="#18a0a8"/><rect x="1.500" y="7.500" width="8" height="3" stroke="#0000ff"/><rect x="1.500" y="15.500" width="8" height="3" stroke="#0000ff"/></g><path d="M1 13 H10" stroke="#0000ff" stroke-width="1.300"/><path d="M1 1 H10" stroke="#18a0a8" stroke-width="1.200"/></g>
<use href="#dd" x="1464.5" y="949"/>
<g transform="translate(1475,928)"><use href="#bshadow"/><path d="M1.500 10.500 L11 1.500 L20.500 6.500 V9.500 L11 20.500 L1.500 15 Z" fill="#f0f4ff" stroke="#0000ff" stroke-width="1.400" stroke-linejoin="round"/><path d="M1.500 10.500 L11 1.500 L20.500 6.500 L11 16 Z" fill="#d4d4ec"/><path d="M1.500 10.500 L11 16 L20.500 6.500 M11 16 V20.500" stroke="#0000ff" stroke-width="1.300" fill="none"/><path d="M2.500 13 L10.500 17.500 M2.500 14.500 L10.500 19 M12 17 L19.500 9 M12 18.500 L19.500 10.500 M3.500 10 L11 3" stroke="#18b0a0" stroke-width="1" fill="none"/></g>
<path d="M1609 926 l3 3 l-3 3 M1613 926 l3 3 l-3 3" stroke="#606070" stroke-width="1" fill="none"/>
<g>
<path d="M1634 921 C1640 920 1645 922 1641 927 L1635 929.500" stroke="#e01828" stroke-width="1.800" fill="none"/>
<path d="M1648.500 929 C1641 927.500 1637 931 1642 934 C1646 936 1644 939.500 1637 939.500" stroke="#f09018" stroke-width="2" fill="none"/>
<path d="M1632 929.500 L1626 942 C1633 941 1639 937 1638.500 933 C1638 930.500 1634 930 1630 930.500" stroke="#3a2a90" stroke-width="1.800" fill="none"/>
<text x="1632.500" y="948.500" font-size="8.500" font-weight="bold" font-style="italic" fill="#3a2a90" textLength="32" lengthAdjust="spacingAndGlyphs">CATIA</text>
</g>
</svg>
<div class="t" style="left:3.300px;top:961.400px;letter-spacing:0.030px;">Enter new data to edit the pocket.</div>
<div class="t" style="left:1277.500px;top:961px;">Dim1</div>
<div class="abs" style="left:1304px;top:960px;width:299px;height:16px;background:#fff;box-shadow:inset 1px 1px 0 #808080,inset 2px 2px 0 #404040,inset -1px -1px 0 #fff;"></div>
<div class="t" style="left:1309.500px;top:961px;">20mm</div>
<div class="abs sbtn" style="left:1605px;top:957px;width:32px;height:21px;"><svg width="32" height="21" style="display:block"><rect x="10.500" y="4.500" width="13" height="12" fill="#c0c0c8" stroke="none"/><path d="M10.500 16.500V4.500H23.500" stroke="#fff" fill="none"/><path d="M10.500 16.500H23.500V4.500" stroke="#404040" fill="none"/><rect x="13" y="6.500" width="6" height="5" fill="#8888a0" stroke="#000" stroke-width="1"/><rect x="20" y="13" width="2" height="1.500" fill="#000"/></svg></div>
<div class="abs sbtn" style="left:1638px;top:957px;width:34px;height:21px;"><svg width="34" height="21" style="display:block"><path d="M10 17.500 V7 L22 3.500 V14.500 L25 17.500 Z" fill="#c8c8d8" stroke="#909098" stroke-width="1"/><circle cx="17" cy="10" r="4.500" fill="#d8d8e4" stroke="#888890" stroke-width="1.200"/><text x="15.300" y="13" font-size="8" font-weight="bold" fill="#707078">i</text></svg></div>
</body>
</html>
